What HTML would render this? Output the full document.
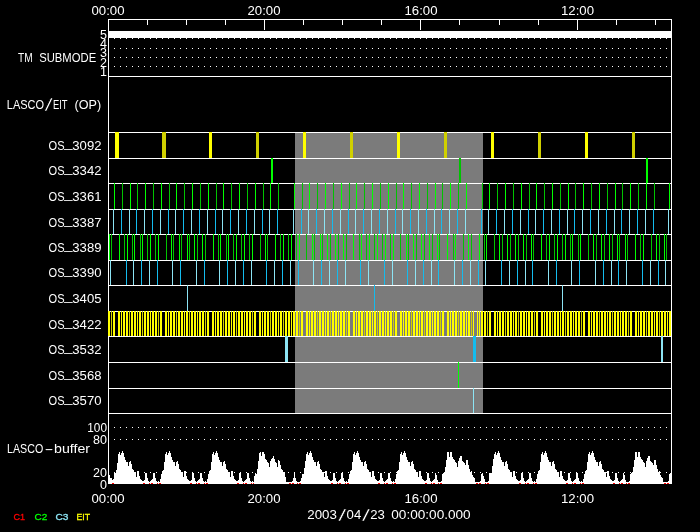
<!DOCTYPE html>
<html><head><meta charset="utf-8"><title>LASCO/EIT schedule</title>
<style>
html,body{margin:0;padding:0;background:#000;}
svg{display:block;}
text{font-family:"Liberation Sans",sans-serif;}
</style></head><body>
<svg width="700" height="532" viewBox="0 0 700 532">
<g shape-rendering="crispEdges">
<rect x="0" y="0" width="700" height="532" fill="#000"/>
<rect x="295" y="132" width="188" height="282" fill="#7b7b7b"/>
<rect x="108" y="19" width="564" height="1" fill="#fff"/>
<rect x="108" y="483" width="564" height="1" fill="#fff"/>
<rect x="108" y="19" width="1" height="465" fill="#fff"/>
<rect x="671" y="19" width="1" height="465" fill="#fff"/>
<rect x="108" y="76" width="563" height="1" fill="#fff"/>
<rect x="108" y="132" width="563" height="1" fill="#fff"/>
<rect x="108" y="158" width="563" height="1" fill="#fff"/>
<rect x="108" y="183" width="563" height="1" fill="#fff"/>
<rect x="108" y="209" width="563" height="1" fill="#fff"/>
<rect x="108" y="234" width="563" height="1" fill="#fff"/>
<rect x="108" y="260" width="563" height="1" fill="#fff"/>
<rect x="108" y="285" width="563" height="1" fill="#fff"/>
<rect x="108" y="311" width="563" height="1" fill="#fff"/>
<rect x="108" y="336" width="563" height="1" fill="#fff"/>
<rect x="108" y="362" width="563" height="1" fill="#fff"/>
<rect x="108" y="388" width="563" height="1" fill="#fff"/>
<rect x="108" y="413" width="563" height="1" fill="#fff"/>
<rect x="108" y="31" width="563" height="7" fill="#fff"/>
<rect x="114" y="38" width="1" height="1" fill="#fff"/>
<rect x="120" y="38" width="1" height="1" fill="#fff"/>
<rect x="126" y="38" width="1" height="1" fill="#fff"/>
<rect x="132" y="38" width="1" height="1" fill="#fff"/>
<rect x="138" y="38" width="1" height="1" fill="#fff"/>
<rect x="144" y="38" width="1" height="1" fill="#fff"/>
<rect x="150" y="38" width="1" height="1" fill="#fff"/>
<rect x="156" y="38" width="1" height="1" fill="#fff"/>
<rect x="162" y="38" width="1" height="1" fill="#fff"/>
<rect x="168" y="38" width="1" height="1" fill="#fff"/>
<rect x="174" y="38" width="1" height="1" fill="#fff"/>
<rect x="180" y="38" width="1" height="1" fill="#fff"/>
<rect x="186" y="38" width="1" height="1" fill="#fff"/>
<rect x="192" y="38" width="1" height="1" fill="#fff"/>
<rect x="198" y="38" width="1" height="1" fill="#fff"/>
<rect x="204" y="38" width="1" height="1" fill="#fff"/>
<rect x="210" y="38" width="1" height="1" fill="#fff"/>
<rect x="216" y="38" width="1" height="1" fill="#fff"/>
<rect x="222" y="38" width="1" height="1" fill="#fff"/>
<rect x="228" y="38" width="1" height="1" fill="#fff"/>
<rect x="234" y="38" width="1" height="1" fill="#fff"/>
<rect x="240" y="38" width="1" height="1" fill="#fff"/>
<rect x="246" y="38" width="1" height="1" fill="#fff"/>
<rect x="252" y="38" width="1" height="1" fill="#fff"/>
<rect x="258" y="38" width="1" height="1" fill="#fff"/>
<rect x="264" y="38" width="1" height="1" fill="#fff"/>
<rect x="270" y="38" width="1" height="1" fill="#fff"/>
<rect x="276" y="38" width="1" height="1" fill="#fff"/>
<rect x="282" y="38" width="1" height="1" fill="#fff"/>
<rect x="288" y="38" width="1" height="1" fill="#fff"/>
<rect x="294" y="38" width="1" height="1" fill="#fff"/>
<rect x="300" y="38" width="1" height="1" fill="#fff"/>
<rect x="306" y="38" width="1" height="1" fill="#fff"/>
<rect x="312" y="38" width="1" height="1" fill="#fff"/>
<rect x="318" y="38" width="1" height="1" fill="#fff"/>
<rect x="324" y="38" width="1" height="1" fill="#fff"/>
<rect x="330" y="38" width="1" height="1" fill="#fff"/>
<rect x="336" y="38" width="1" height="1" fill="#fff"/>
<rect x="342" y="38" width="1" height="1" fill="#fff"/>
<rect x="348" y="38" width="1" height="1" fill="#fff"/>
<rect x="354" y="38" width="1" height="1" fill="#fff"/>
<rect x="360" y="38" width="1" height="1" fill="#fff"/>
<rect x="366" y="38" width="1" height="1" fill="#fff"/>
<rect x="372" y="38" width="1" height="1" fill="#fff"/>
<rect x="378" y="38" width="1" height="1" fill="#fff"/>
<rect x="384" y="38" width="1" height="1" fill="#fff"/>
<rect x="390" y="38" width="1" height="1" fill="#fff"/>
<rect x="396" y="38" width="1" height="1" fill="#fff"/>
<rect x="402" y="38" width="1" height="1" fill="#fff"/>
<rect x="408" y="38" width="1" height="1" fill="#fff"/>
<rect x="414" y="38" width="1" height="1" fill="#fff"/>
<rect x="420" y="38" width="1" height="1" fill="#fff"/>
<rect x="426" y="38" width="1" height="1" fill="#fff"/>
<rect x="432" y="38" width="1" height="1" fill="#fff"/>
<rect x="438" y="38" width="1" height="1" fill="#fff"/>
<rect x="444" y="38" width="1" height="1" fill="#fff"/>
<rect x="450" y="38" width="1" height="1" fill="#fff"/>
<rect x="456" y="38" width="1" height="1" fill="#fff"/>
<rect x="462" y="38" width="1" height="1" fill="#fff"/>
<rect x="468" y="38" width="1" height="1" fill="#fff"/>
<rect x="474" y="38" width="1" height="1" fill="#fff"/>
<rect x="480" y="38" width="1" height="1" fill="#fff"/>
<rect x="486" y="38" width="1" height="1" fill="#fff"/>
<rect x="492" y="38" width="1" height="1" fill="#fff"/>
<rect x="498" y="38" width="1" height="1" fill="#fff"/>
<rect x="504" y="38" width="1" height="1" fill="#fff"/>
<rect x="510" y="38" width="1" height="1" fill="#fff"/>
<rect x="516" y="38" width="1" height="1" fill="#fff"/>
<rect x="522" y="38" width="1" height="1" fill="#fff"/>
<rect x="528" y="38" width="1" height="1" fill="#fff"/>
<rect x="534" y="38" width="1" height="1" fill="#fff"/>
<rect x="540" y="38" width="1" height="1" fill="#fff"/>
<rect x="546" y="38" width="1" height="1" fill="#fff"/>
<rect x="552" y="38" width="1" height="1" fill="#fff"/>
<rect x="558" y="38" width="1" height="1" fill="#fff"/>
<rect x="564" y="38" width="1" height="1" fill="#fff"/>
<rect x="570" y="38" width="1" height="1" fill="#fff"/>
<rect x="576" y="38" width="1" height="1" fill="#fff"/>
<rect x="582" y="38" width="1" height="1" fill="#fff"/>
<rect x="588" y="38" width="1" height="1" fill="#fff"/>
<rect x="594" y="38" width="1" height="1" fill="#fff"/>
<rect x="600" y="38" width="1" height="1" fill="#fff"/>
<rect x="606" y="38" width="1" height="1" fill="#fff"/>
<rect x="612" y="38" width="1" height="1" fill="#fff"/>
<rect x="618" y="38" width="1" height="1" fill="#fff"/>
<rect x="624" y="38" width="1" height="1" fill="#fff"/>
<rect x="630" y="38" width="1" height="1" fill="#fff"/>
<rect x="636" y="38" width="1" height="1" fill="#fff"/>
<rect x="642" y="38" width="1" height="1" fill="#fff"/>
<rect x="648" y="38" width="1" height="1" fill="#fff"/>
<rect x="654" y="38" width="1" height="1" fill="#fff"/>
<rect x="660" y="38" width="1" height="1" fill="#fff"/>
<rect x="666" y="38" width="1" height="1" fill="#fff"/>
<rect x="114" y="48" width="1" height="1" fill="#fff"/>
<rect x="120" y="48" width="1" height="1" fill="#fff"/>
<rect x="126" y="48" width="1" height="1" fill="#fff"/>
<rect x="132" y="48" width="1" height="1" fill="#fff"/>
<rect x="138" y="48" width="1" height="1" fill="#fff"/>
<rect x="144" y="48" width="1" height="1" fill="#fff"/>
<rect x="150" y="48" width="1" height="1" fill="#fff"/>
<rect x="156" y="48" width="1" height="1" fill="#fff"/>
<rect x="162" y="48" width="1" height="1" fill="#fff"/>
<rect x="168" y="48" width="1" height="1" fill="#fff"/>
<rect x="174" y="48" width="1" height="1" fill="#fff"/>
<rect x="180" y="48" width="1" height="1" fill="#fff"/>
<rect x="186" y="48" width="1" height="1" fill="#fff"/>
<rect x="192" y="48" width="1" height="1" fill="#fff"/>
<rect x="198" y="48" width="1" height="1" fill="#fff"/>
<rect x="204" y="48" width="1" height="1" fill="#fff"/>
<rect x="210" y="48" width="1" height="1" fill="#fff"/>
<rect x="216" y="48" width="1" height="1" fill="#fff"/>
<rect x="222" y="48" width="1" height="1" fill="#fff"/>
<rect x="228" y="48" width="1" height="1" fill="#fff"/>
<rect x="234" y="48" width="1" height="1" fill="#fff"/>
<rect x="240" y="48" width="1" height="1" fill="#fff"/>
<rect x="246" y="48" width="1" height="1" fill="#fff"/>
<rect x="252" y="48" width="1" height="1" fill="#fff"/>
<rect x="258" y="48" width="1" height="1" fill="#fff"/>
<rect x="264" y="48" width="1" height="1" fill="#fff"/>
<rect x="270" y="48" width="1" height="1" fill="#fff"/>
<rect x="276" y="48" width="1" height="1" fill="#fff"/>
<rect x="282" y="48" width="1" height="1" fill="#fff"/>
<rect x="288" y="48" width="1" height="1" fill="#fff"/>
<rect x="294" y="48" width="1" height="1" fill="#fff"/>
<rect x="300" y="48" width="1" height="1" fill="#fff"/>
<rect x="306" y="48" width="1" height="1" fill="#fff"/>
<rect x="312" y="48" width="1" height="1" fill="#fff"/>
<rect x="318" y="48" width="1" height="1" fill="#fff"/>
<rect x="324" y="48" width="1" height="1" fill="#fff"/>
<rect x="330" y="48" width="1" height="1" fill="#fff"/>
<rect x="336" y="48" width="1" height="1" fill="#fff"/>
<rect x="342" y="48" width="1" height="1" fill="#fff"/>
<rect x="348" y="48" width="1" height="1" fill="#fff"/>
<rect x="354" y="48" width="1" height="1" fill="#fff"/>
<rect x="360" y="48" width="1" height="1" fill="#fff"/>
<rect x="366" y="48" width="1" height="1" fill="#fff"/>
<rect x="372" y="48" width="1" height="1" fill="#fff"/>
<rect x="378" y="48" width="1" height="1" fill="#fff"/>
<rect x="384" y="48" width="1" height="1" fill="#fff"/>
<rect x="390" y="48" width="1" height="1" fill="#fff"/>
<rect x="396" y="48" width="1" height="1" fill="#fff"/>
<rect x="402" y="48" width="1" height="1" fill="#fff"/>
<rect x="408" y="48" width="1" height="1" fill="#fff"/>
<rect x="414" y="48" width="1" height="1" fill="#fff"/>
<rect x="420" y="48" width="1" height="1" fill="#fff"/>
<rect x="426" y="48" width="1" height="1" fill="#fff"/>
<rect x="432" y="48" width="1" height="1" fill="#fff"/>
<rect x="438" y="48" width="1" height="1" fill="#fff"/>
<rect x="444" y="48" width="1" height="1" fill="#fff"/>
<rect x="450" y="48" width="1" height="1" fill="#fff"/>
<rect x="456" y="48" width="1" height="1" fill="#fff"/>
<rect x="462" y="48" width="1" height="1" fill="#fff"/>
<rect x="468" y="48" width="1" height="1" fill="#fff"/>
<rect x="474" y="48" width="1" height="1" fill="#fff"/>
<rect x="480" y="48" width="1" height="1" fill="#fff"/>
<rect x="486" y="48" width="1" height="1" fill="#fff"/>
<rect x="492" y="48" width="1" height="1" fill="#fff"/>
<rect x="498" y="48" width="1" height="1" fill="#fff"/>
<rect x="504" y="48" width="1" height="1" fill="#fff"/>
<rect x="510" y="48" width="1" height="1" fill="#fff"/>
<rect x="516" y="48" width="1" height="1" fill="#fff"/>
<rect x="522" y="48" width="1" height="1" fill="#fff"/>
<rect x="528" y="48" width="1" height="1" fill="#fff"/>
<rect x="534" y="48" width="1" height="1" fill="#fff"/>
<rect x="540" y="48" width="1" height="1" fill="#fff"/>
<rect x="546" y="48" width="1" height="1" fill="#fff"/>
<rect x="552" y="48" width="1" height="1" fill="#fff"/>
<rect x="558" y="48" width="1" height="1" fill="#fff"/>
<rect x="564" y="48" width="1" height="1" fill="#fff"/>
<rect x="570" y="48" width="1" height="1" fill="#fff"/>
<rect x="576" y="48" width="1" height="1" fill="#fff"/>
<rect x="582" y="48" width="1" height="1" fill="#fff"/>
<rect x="588" y="48" width="1" height="1" fill="#fff"/>
<rect x="594" y="48" width="1" height="1" fill="#fff"/>
<rect x="600" y="48" width="1" height="1" fill="#fff"/>
<rect x="606" y="48" width="1" height="1" fill="#fff"/>
<rect x="612" y="48" width="1" height="1" fill="#fff"/>
<rect x="618" y="48" width="1" height="1" fill="#fff"/>
<rect x="624" y="48" width="1" height="1" fill="#fff"/>
<rect x="630" y="48" width="1" height="1" fill="#fff"/>
<rect x="636" y="48" width="1" height="1" fill="#fff"/>
<rect x="642" y="48" width="1" height="1" fill="#fff"/>
<rect x="648" y="48" width="1" height="1" fill="#fff"/>
<rect x="654" y="48" width="1" height="1" fill="#fff"/>
<rect x="660" y="48" width="1" height="1" fill="#fff"/>
<rect x="666" y="48" width="1" height="1" fill="#fff"/>
<rect x="114" y="57" width="1" height="1" fill="#fff"/>
<rect x="120" y="57" width="1" height="1" fill="#fff"/>
<rect x="126" y="57" width="1" height="1" fill="#fff"/>
<rect x="132" y="57" width="1" height="1" fill="#fff"/>
<rect x="138" y="57" width="1" height="1" fill="#fff"/>
<rect x="144" y="57" width="1" height="1" fill="#fff"/>
<rect x="150" y="57" width="1" height="1" fill="#fff"/>
<rect x="156" y="57" width="1" height="1" fill="#fff"/>
<rect x="162" y="57" width="1" height="1" fill="#fff"/>
<rect x="168" y="57" width="1" height="1" fill="#fff"/>
<rect x="174" y="57" width="1" height="1" fill="#fff"/>
<rect x="180" y="57" width="1" height="1" fill="#fff"/>
<rect x="186" y="57" width="1" height="1" fill="#fff"/>
<rect x="192" y="57" width="1" height="1" fill="#fff"/>
<rect x="198" y="57" width="1" height="1" fill="#fff"/>
<rect x="204" y="57" width="1" height="1" fill="#fff"/>
<rect x="210" y="57" width="1" height="1" fill="#fff"/>
<rect x="216" y="57" width="1" height="1" fill="#fff"/>
<rect x="222" y="57" width="1" height="1" fill="#fff"/>
<rect x="228" y="57" width="1" height="1" fill="#fff"/>
<rect x="234" y="57" width="1" height="1" fill="#fff"/>
<rect x="240" y="57" width="1" height="1" fill="#fff"/>
<rect x="246" y="57" width="1" height="1" fill="#fff"/>
<rect x="252" y="57" width="1" height="1" fill="#fff"/>
<rect x="258" y="57" width="1" height="1" fill="#fff"/>
<rect x="264" y="57" width="1" height="1" fill="#fff"/>
<rect x="270" y="57" width="1" height="1" fill="#fff"/>
<rect x="276" y="57" width="1" height="1" fill="#fff"/>
<rect x="282" y="57" width="1" height="1" fill="#fff"/>
<rect x="288" y="57" width="1" height="1" fill="#fff"/>
<rect x="294" y="57" width="1" height="1" fill="#fff"/>
<rect x="300" y="57" width="1" height="1" fill="#fff"/>
<rect x="306" y="57" width="1" height="1" fill="#fff"/>
<rect x="312" y="57" width="1" height="1" fill="#fff"/>
<rect x="318" y="57" width="1" height="1" fill="#fff"/>
<rect x="324" y="57" width="1" height="1" fill="#fff"/>
<rect x="330" y="57" width="1" height="1" fill="#fff"/>
<rect x="336" y="57" width="1" height="1" fill="#fff"/>
<rect x="342" y="57" width="1" height="1" fill="#fff"/>
<rect x="348" y="57" width="1" height="1" fill="#fff"/>
<rect x="354" y="57" width="1" height="1" fill="#fff"/>
<rect x="360" y="57" width="1" height="1" fill="#fff"/>
<rect x="366" y="57" width="1" height="1" fill="#fff"/>
<rect x="372" y="57" width="1" height="1" fill="#fff"/>
<rect x="378" y="57" width="1" height="1" fill="#fff"/>
<rect x="384" y="57" width="1" height="1" fill="#fff"/>
<rect x="390" y="57" width="1" height="1" fill="#fff"/>
<rect x="396" y="57" width="1" height="1" fill="#fff"/>
<rect x="402" y="57" width="1" height="1" fill="#fff"/>
<rect x="408" y="57" width="1" height="1" fill="#fff"/>
<rect x="414" y="57" width="1" height="1" fill="#fff"/>
<rect x="420" y="57" width="1" height="1" fill="#fff"/>
<rect x="426" y="57" width="1" height="1" fill="#fff"/>
<rect x="432" y="57" width="1" height="1" fill="#fff"/>
<rect x="438" y="57" width="1" height="1" fill="#fff"/>
<rect x="444" y="57" width="1" height="1" fill="#fff"/>
<rect x="450" y="57" width="1" height="1" fill="#fff"/>
<rect x="456" y="57" width="1" height="1" fill="#fff"/>
<rect x="462" y="57" width="1" height="1" fill="#fff"/>
<rect x="468" y="57" width="1" height="1" fill="#fff"/>
<rect x="474" y="57" width="1" height="1" fill="#fff"/>
<rect x="480" y="57" width="1" height="1" fill="#fff"/>
<rect x="486" y="57" width="1" height="1" fill="#fff"/>
<rect x="492" y="57" width="1" height="1" fill="#fff"/>
<rect x="498" y="57" width="1" height="1" fill="#fff"/>
<rect x="504" y="57" width="1" height="1" fill="#fff"/>
<rect x="510" y="57" width="1" height="1" fill="#fff"/>
<rect x="516" y="57" width="1" height="1" fill="#fff"/>
<rect x="522" y="57" width="1" height="1" fill="#fff"/>
<rect x="528" y="57" width="1" height="1" fill="#fff"/>
<rect x="534" y="57" width="1" height="1" fill="#fff"/>
<rect x="540" y="57" width="1" height="1" fill="#fff"/>
<rect x="546" y="57" width="1" height="1" fill="#fff"/>
<rect x="552" y="57" width="1" height="1" fill="#fff"/>
<rect x="558" y="57" width="1" height="1" fill="#fff"/>
<rect x="564" y="57" width="1" height="1" fill="#fff"/>
<rect x="570" y="57" width="1" height="1" fill="#fff"/>
<rect x="576" y="57" width="1" height="1" fill="#fff"/>
<rect x="582" y="57" width="1" height="1" fill="#fff"/>
<rect x="588" y="57" width="1" height="1" fill="#fff"/>
<rect x="594" y="57" width="1" height="1" fill="#fff"/>
<rect x="600" y="57" width="1" height="1" fill="#fff"/>
<rect x="606" y="57" width="1" height="1" fill="#fff"/>
<rect x="612" y="57" width="1" height="1" fill="#fff"/>
<rect x="618" y="57" width="1" height="1" fill="#fff"/>
<rect x="624" y="57" width="1" height="1" fill="#fff"/>
<rect x="630" y="57" width="1" height="1" fill="#fff"/>
<rect x="636" y="57" width="1" height="1" fill="#fff"/>
<rect x="642" y="57" width="1" height="1" fill="#fff"/>
<rect x="648" y="57" width="1" height="1" fill="#fff"/>
<rect x="654" y="57" width="1" height="1" fill="#fff"/>
<rect x="660" y="57" width="1" height="1" fill="#fff"/>
<rect x="666" y="57" width="1" height="1" fill="#fff"/>
<rect x="114" y="66" width="1" height="1" fill="#fff"/>
<rect x="120" y="66" width="1" height="1" fill="#fff"/>
<rect x="126" y="66" width="1" height="1" fill="#fff"/>
<rect x="132" y="66" width="1" height="1" fill="#fff"/>
<rect x="138" y="66" width="1" height="1" fill="#fff"/>
<rect x="144" y="66" width="1" height="1" fill="#fff"/>
<rect x="150" y="66" width="1" height="1" fill="#fff"/>
<rect x="156" y="66" width="1" height="1" fill="#fff"/>
<rect x="162" y="66" width="1" height="1" fill="#fff"/>
<rect x="168" y="66" width="1" height="1" fill="#fff"/>
<rect x="174" y="66" width="1" height="1" fill="#fff"/>
<rect x="180" y="66" width="1" height="1" fill="#fff"/>
<rect x="186" y="66" width="1" height="1" fill="#fff"/>
<rect x="192" y="66" width="1" height="1" fill="#fff"/>
<rect x="198" y="66" width="1" height="1" fill="#fff"/>
<rect x="204" y="66" width="1" height="1" fill="#fff"/>
<rect x="210" y="66" width="1" height="1" fill="#fff"/>
<rect x="216" y="66" width="1" height="1" fill="#fff"/>
<rect x="222" y="66" width="1" height="1" fill="#fff"/>
<rect x="228" y="66" width="1" height="1" fill="#fff"/>
<rect x="234" y="66" width="1" height="1" fill="#fff"/>
<rect x="240" y="66" width="1" height="1" fill="#fff"/>
<rect x="246" y="66" width="1" height="1" fill="#fff"/>
<rect x="252" y="66" width="1" height="1" fill="#fff"/>
<rect x="258" y="66" width="1" height="1" fill="#fff"/>
<rect x="264" y="66" width="1" height="1" fill="#fff"/>
<rect x="270" y="66" width="1" height="1" fill="#fff"/>
<rect x="276" y="66" width="1" height="1" fill="#fff"/>
<rect x="282" y="66" width="1" height="1" fill="#fff"/>
<rect x="288" y="66" width="1" height="1" fill="#fff"/>
<rect x="294" y="66" width="1" height="1" fill="#fff"/>
<rect x="300" y="66" width="1" height="1" fill="#fff"/>
<rect x="306" y="66" width="1" height="1" fill="#fff"/>
<rect x="312" y="66" width="1" height="1" fill="#fff"/>
<rect x="318" y="66" width="1" height="1" fill="#fff"/>
<rect x="324" y="66" width="1" height="1" fill="#fff"/>
<rect x="330" y="66" width="1" height="1" fill="#fff"/>
<rect x="336" y="66" width="1" height="1" fill="#fff"/>
<rect x="342" y="66" width="1" height="1" fill="#fff"/>
<rect x="348" y="66" width="1" height="1" fill="#fff"/>
<rect x="354" y="66" width="1" height="1" fill="#fff"/>
<rect x="360" y="66" width="1" height="1" fill="#fff"/>
<rect x="366" y="66" width="1" height="1" fill="#fff"/>
<rect x="372" y="66" width="1" height="1" fill="#fff"/>
<rect x="378" y="66" width="1" height="1" fill="#fff"/>
<rect x="384" y="66" width="1" height="1" fill="#fff"/>
<rect x="390" y="66" width="1" height="1" fill="#fff"/>
<rect x="396" y="66" width="1" height="1" fill="#fff"/>
<rect x="402" y="66" width="1" height="1" fill="#fff"/>
<rect x="408" y="66" width="1" height="1" fill="#fff"/>
<rect x="414" y="66" width="1" height="1" fill="#fff"/>
<rect x="420" y="66" width="1" height="1" fill="#fff"/>
<rect x="426" y="66" width="1" height="1" fill="#fff"/>
<rect x="432" y="66" width="1" height="1" fill="#fff"/>
<rect x="438" y="66" width="1" height="1" fill="#fff"/>
<rect x="444" y="66" width="1" height="1" fill="#fff"/>
<rect x="450" y="66" width="1" height="1" fill="#fff"/>
<rect x="456" y="66" width="1" height="1" fill="#fff"/>
<rect x="462" y="66" width="1" height="1" fill="#fff"/>
<rect x="468" y="66" width="1" height="1" fill="#fff"/>
<rect x="474" y="66" width="1" height="1" fill="#fff"/>
<rect x="480" y="66" width="1" height="1" fill="#fff"/>
<rect x="486" y="66" width="1" height="1" fill="#fff"/>
<rect x="492" y="66" width="1" height="1" fill="#fff"/>
<rect x="498" y="66" width="1" height="1" fill="#fff"/>
<rect x="504" y="66" width="1" height="1" fill="#fff"/>
<rect x="510" y="66" width="1" height="1" fill="#fff"/>
<rect x="516" y="66" width="1" height="1" fill="#fff"/>
<rect x="522" y="66" width="1" height="1" fill="#fff"/>
<rect x="528" y="66" width="1" height="1" fill="#fff"/>
<rect x="534" y="66" width="1" height="1" fill="#fff"/>
<rect x="540" y="66" width="1" height="1" fill="#fff"/>
<rect x="546" y="66" width="1" height="1" fill="#fff"/>
<rect x="552" y="66" width="1" height="1" fill="#fff"/>
<rect x="558" y="66" width="1" height="1" fill="#fff"/>
<rect x="564" y="66" width="1" height="1" fill="#fff"/>
<rect x="570" y="66" width="1" height="1" fill="#fff"/>
<rect x="576" y="66" width="1" height="1" fill="#fff"/>
<rect x="582" y="66" width="1" height="1" fill="#fff"/>
<rect x="588" y="66" width="1" height="1" fill="#fff"/>
<rect x="594" y="66" width="1" height="1" fill="#fff"/>
<rect x="600" y="66" width="1" height="1" fill="#fff"/>
<rect x="606" y="66" width="1" height="1" fill="#fff"/>
<rect x="612" y="66" width="1" height="1" fill="#fff"/>
<rect x="618" y="66" width="1" height="1" fill="#fff"/>
<rect x="624" y="66" width="1" height="1" fill="#fff"/>
<rect x="630" y="66" width="1" height="1" fill="#fff"/>
<rect x="636" y="66" width="1" height="1" fill="#fff"/>
<rect x="642" y="66" width="1" height="1" fill="#fff"/>
<rect x="648" y="66" width="1" height="1" fill="#fff"/>
<rect x="654" y="66" width="1" height="1" fill="#fff"/>
<rect x="660" y="66" width="1" height="1" fill="#fff"/>
<rect x="666" y="66" width="1" height="1" fill="#fff"/>
<rect x="115" y="132" width="4" height="26" fill="#ffff00"/>
<rect x="162" y="132" width="4" height="26" fill="#d0d000"/>
<rect x="209" y="132" width="3" height="26" fill="#ffff00"/>
<rect x="256" y="132" width="3" height="26" fill="#d0d000"/>
<rect x="303" y="132" width="3" height="26" fill="#ffff00"/>
<rect x="350" y="132" width="3" height="26" fill="#d0d000"/>
<rect x="397" y="132" width="3" height="26" fill="#ffff00"/>
<rect x="444" y="132" width="3" height="26" fill="#d0d000"/>
<rect x="491" y="132" width="3" height="26" fill="#ffff00"/>
<rect x="538" y="132" width="3" height="26" fill="#d0d000"/>
<rect x="585" y="132" width="3" height="26" fill="#ffff00"/>
<rect x="632" y="132" width="3" height="26" fill="#d0d000"/>
<rect x="271" y="158" width="2" height="25" fill="#00ff00"/>
<rect x="459" y="158" width="2" height="25" fill="#00c400"/>
<rect x="646" y="158" width="2" height="25" fill="#00ff00"/>
<rect x="114" y="183" width="1" height="26" fill="#00ff00"/>
<rect x="113" y="209" width="1" height="25" fill="#8ce4f4"/>
<rect x="122" y="183" width="1" height="26" fill="#00c400"/>
<rect x="121" y="209" width="1" height="25" fill="#14bcee"/>
<rect x="130" y="183" width="1" height="26" fill="#00ff00"/>
<rect x="129" y="209" width="1" height="25" fill="#8ce4f4"/>
<rect x="137" y="183" width="1" height="26" fill="#00c400"/>
<rect x="136" y="209" width="1" height="25" fill="#14bcee"/>
<rect x="145" y="183" width="1" height="26" fill="#00ff00"/>
<rect x="144" y="209" width="1" height="25" fill="#8ce4f4"/>
<rect x="153" y="183" width="1" height="26" fill="#00c400"/>
<rect x="152" y="209" width="1" height="25" fill="#14bcee"/>
<rect x="161" y="183" width="1" height="26" fill="#00ff00"/>
<rect x="160" y="209" width="1" height="25" fill="#8ce4f4"/>
<rect x="169" y="183" width="1" height="26" fill="#00c400"/>
<rect x="168" y="209" width="1" height="25" fill="#14bcee"/>
<rect x="176" y="183" width="1" height="26" fill="#00ff00"/>
<rect x="175" y="209" width="1" height="25" fill="#8ce4f4"/>
<rect x="184" y="183" width="1" height="26" fill="#00c400"/>
<rect x="183" y="209" width="1" height="25" fill="#14bcee"/>
<rect x="192" y="183" width="1" height="26" fill="#00ff00"/>
<rect x="191" y="209" width="1" height="25" fill="#8ce4f4"/>
<rect x="200" y="183" width="1" height="26" fill="#00c400"/>
<rect x="199" y="209" width="1" height="25" fill="#14bcee"/>
<rect x="208" y="183" width="1" height="26" fill="#00ff00"/>
<rect x="207" y="209" width="1" height="25" fill="#8ce4f4"/>
<rect x="216" y="183" width="1" height="26" fill="#00c400"/>
<rect x="215" y="209" width="1" height="25" fill="#14bcee"/>
<rect x="223" y="183" width="1" height="26" fill="#00ff00"/>
<rect x="222" y="209" width="1" height="25" fill="#8ce4f4"/>
<rect x="231" y="183" width="1" height="26" fill="#00c400"/>
<rect x="230" y="209" width="1" height="25" fill="#14bcee"/>
<rect x="239" y="183" width="1" height="26" fill="#00ff00"/>
<rect x="238" y="209" width="1" height="25" fill="#8ce4f4"/>
<rect x="247" y="183" width="1" height="26" fill="#00c400"/>
<rect x="246" y="209" width="1" height="25" fill="#14bcee"/>
<rect x="255" y="183" width="1" height="26" fill="#00ff00"/>
<rect x="254" y="209" width="1" height="25" fill="#8ce4f4"/>
<rect x="263" y="183" width="1" height="26" fill="#00c400"/>
<rect x="262" y="209" width="1" height="25" fill="#14bcee"/>
<rect x="270" y="183" width="1" height="26" fill="#00ff00"/>
<rect x="269" y="209" width="1" height="25" fill="#8ce4f4"/>
<rect x="278" y="183" width="1" height="26" fill="#00c400"/>
<rect x="277" y="209" width="1" height="25" fill="#14bcee"/>
<rect x="294" y="183" width="1" height="26" fill="#00ff00"/>
<rect x="293" y="209" width="1" height="25" fill="#8ce4f4"/>
<rect x="302" y="183" width="1" height="26" fill="#00c400"/>
<rect x="301" y="209" width="1" height="25" fill="#14bcee"/>
<rect x="309" y="183" width="1" height="26" fill="#00ff00"/>
<rect x="308" y="209" width="1" height="25" fill="#8ce4f4"/>
<rect x="317" y="183" width="1" height="26" fill="#00c400"/>
<rect x="316" y="209" width="1" height="25" fill="#14bcee"/>
<rect x="325" y="183" width="1" height="26" fill="#00ff00"/>
<rect x="324" y="209" width="1" height="25" fill="#8ce4f4"/>
<rect x="333" y="183" width="1" height="26" fill="#00c400"/>
<rect x="332" y="209" width="1" height="25" fill="#14bcee"/>
<rect x="341" y="183" width="1" height="26" fill="#00ff00"/>
<rect x="340" y="209" width="1" height="25" fill="#8ce4f4"/>
<rect x="349" y="183" width="1" height="26" fill="#00c400"/>
<rect x="348" y="209" width="1" height="25" fill="#14bcee"/>
<rect x="356" y="183" width="1" height="26" fill="#00ff00"/>
<rect x="355" y="209" width="1" height="25" fill="#8ce4f4"/>
<rect x="364" y="183" width="1" height="26" fill="#00c400"/>
<rect x="363" y="209" width="1" height="25" fill="#14bcee"/>
<rect x="372" y="183" width="1" height="26" fill="#00ff00"/>
<rect x="371" y="209" width="1" height="25" fill="#8ce4f4"/>
<rect x="380" y="183" width="1" height="26" fill="#00c400"/>
<rect x="379" y="209" width="1" height="25" fill="#14bcee"/>
<rect x="388" y="183" width="1" height="26" fill="#00ff00"/>
<rect x="387" y="209" width="1" height="25" fill="#8ce4f4"/>
<rect x="396" y="183" width="1" height="26" fill="#00c400"/>
<rect x="395" y="209" width="1" height="25" fill="#14bcee"/>
<rect x="403" y="183" width="1" height="26" fill="#00ff00"/>
<rect x="402" y="209" width="1" height="25" fill="#8ce4f4"/>
<rect x="411" y="183" width="1" height="26" fill="#00c400"/>
<rect x="410" y="209" width="1" height="25" fill="#14bcee"/>
<rect x="419" y="183" width="1" height="26" fill="#00ff00"/>
<rect x="418" y="209" width="1" height="25" fill="#8ce4f4"/>
<rect x="427" y="183" width="1" height="26" fill="#00c400"/>
<rect x="426" y="209" width="1" height="25" fill="#14bcee"/>
<rect x="435" y="183" width="1" height="26" fill="#00ff00"/>
<rect x="434" y="209" width="1" height="25" fill="#8ce4f4"/>
<rect x="442" y="183" width="1" height="26" fill="#00c400"/>
<rect x="441" y="209" width="1" height="25" fill="#14bcee"/>
<rect x="450" y="183" width="1" height="26" fill="#00ff00"/>
<rect x="449" y="209" width="1" height="25" fill="#8ce4f4"/>
<rect x="458" y="183" width="1" height="26" fill="#00c400"/>
<rect x="457" y="209" width="1" height="25" fill="#14bcee"/>
<rect x="466" y="183" width="1" height="26" fill="#00ff00"/>
<rect x="465" y="209" width="1" height="25" fill="#8ce4f4"/>
<rect x="482" y="183" width="1" height="26" fill="#00c400"/>
<rect x="481" y="209" width="1" height="25" fill="#14bcee"/>
<rect x="489" y="183" width="1" height="26" fill="#00ff00"/>
<rect x="488" y="209" width="1" height="25" fill="#8ce4f4"/>
<rect x="497" y="183" width="1" height="26" fill="#00c400"/>
<rect x="496" y="209" width="1" height="25" fill="#14bcee"/>
<rect x="505" y="183" width="1" height="26" fill="#00ff00"/>
<rect x="504" y="209" width="1" height="25" fill="#8ce4f4"/>
<rect x="513" y="183" width="1" height="26" fill="#00c400"/>
<rect x="512" y="209" width="1" height="25" fill="#14bcee"/>
<rect x="521" y="183" width="1" height="26" fill="#00ff00"/>
<rect x="520" y="209" width="1" height="25" fill="#8ce4f4"/>
<rect x="529" y="183" width="1" height="26" fill="#00c400"/>
<rect x="528" y="209" width="1" height="25" fill="#14bcee"/>
<rect x="536" y="183" width="1" height="26" fill="#00ff00"/>
<rect x="535" y="209" width="1" height="25" fill="#8ce4f4"/>
<rect x="544" y="183" width="1" height="26" fill="#00c400"/>
<rect x="543" y="209" width="1" height="25" fill="#14bcee"/>
<rect x="552" y="183" width="1" height="26" fill="#00ff00"/>
<rect x="551" y="209" width="1" height="25" fill="#8ce4f4"/>
<rect x="560" y="183" width="1" height="26" fill="#00c400"/>
<rect x="559" y="209" width="1" height="25" fill="#14bcee"/>
<rect x="568" y="183" width="1" height="26" fill="#00ff00"/>
<rect x="567" y="209" width="1" height="25" fill="#8ce4f4"/>
<rect x="575" y="183" width="1" height="26" fill="#00c400"/>
<rect x="574" y="209" width="1" height="25" fill="#14bcee"/>
<rect x="583" y="183" width="1" height="26" fill="#00ff00"/>
<rect x="582" y="209" width="1" height="25" fill="#8ce4f4"/>
<rect x="591" y="183" width="1" height="26" fill="#00c400"/>
<rect x="590" y="209" width="1" height="25" fill="#14bcee"/>
<rect x="599" y="183" width="1" height="26" fill="#00ff00"/>
<rect x="598" y="209" width="1" height="25" fill="#8ce4f4"/>
<rect x="607" y="183" width="1" height="26" fill="#00c400"/>
<rect x="606" y="209" width="1" height="25" fill="#14bcee"/>
<rect x="615" y="183" width="1" height="26" fill="#00ff00"/>
<rect x="614" y="209" width="1" height="25" fill="#8ce4f4"/>
<rect x="622" y="183" width="1" height="26" fill="#00c400"/>
<rect x="621" y="209" width="1" height="25" fill="#14bcee"/>
<rect x="630" y="183" width="1" height="26" fill="#00ff00"/>
<rect x="629" y="209" width="1" height="25" fill="#8ce4f4"/>
<rect x="638" y="183" width="1" height="26" fill="#00c400"/>
<rect x="637" y="209" width="1" height="25" fill="#14bcee"/>
<rect x="646" y="183" width="1" height="26" fill="#00ff00"/>
<rect x="645" y="209" width="1" height="25" fill="#8ce4f4"/>
<rect x="654" y="183" width="1" height="26" fill="#00c400"/>
<rect x="653" y="209" width="1" height="25" fill="#14bcee"/>
<rect x="669" y="183" width="1" height="26" fill="#00ff00"/>
<rect x="668" y="209" width="1" height="25" fill="#8ce4f4"/>
<rect x="109" y="234" width="1" height="26" fill="#00ff00"/>
<rect x="111" y="234" width="1" height="26" fill="#00c400"/>
<rect x="119" y="234" width="1" height="26" fill="#00ff00"/>
<rect x="124" y="234" width="1" height="26" fill="#00c400"/>
<rect x="127" y="234" width="1" height="26" fill="#00ff00"/>
<rect x="132" y="234" width="1" height="26" fill="#00c400"/>
<rect x="134" y="234" width="1" height="26" fill="#00ff00"/>
<rect x="140" y="234" width="1" height="26" fill="#00c400"/>
<rect x="142" y="234" width="1" height="26" fill="#00ff00"/>
<rect x="147" y="234" width="1" height="26" fill="#00c400"/>
<rect x="150" y="234" width="1" height="26" fill="#00ff00"/>
<rect x="155" y="234" width="1" height="26" fill="#00c400"/>
<rect x="158" y="234" width="1" height="26" fill="#00ff00"/>
<rect x="166" y="234" width="1" height="26" fill="#00c400"/>
<rect x="171" y="234" width="1" height="26" fill="#00ff00"/>
<rect x="173" y="234" width="1" height="26" fill="#00c400"/>
<rect x="179" y="234" width="1" height="26" fill="#00ff00"/>
<rect x="181" y="234" width="1" height="26" fill="#00c400"/>
<rect x="187" y="234" width="1" height="26" fill="#00ff00"/>
<rect x="189" y="234" width="1" height="26" fill="#00c400"/>
<rect x="194" y="234" width="1" height="26" fill="#00ff00"/>
<rect x="197" y="234" width="1" height="26" fill="#00c400"/>
<rect x="202" y="234" width="1" height="26" fill="#00ff00"/>
<rect x="205" y="234" width="1" height="26" fill="#00c400"/>
<rect x="213" y="234" width="1" height="26" fill="#00ff00"/>
<rect x="218" y="234" width="1" height="26" fill="#00c400"/>
<rect x="220" y="234" width="1" height="26" fill="#00ff00"/>
<rect x="226" y="234" width="1" height="26" fill="#00c400"/>
<rect x="228" y="234" width="1" height="26" fill="#00ff00"/>
<rect x="233" y="234" width="1" height="26" fill="#00c400"/>
<rect x="236" y="234" width="1" height="26" fill="#00ff00"/>
<rect x="241" y="234" width="1" height="26" fill="#00c400"/>
<rect x="244" y="234" width="1" height="26" fill="#00ff00"/>
<rect x="249" y="234" width="1" height="26" fill="#00c400"/>
<rect x="252" y="234" width="1" height="26" fill="#00ff00"/>
<rect x="260" y="234" width="1" height="26" fill="#00c400"/>
<rect x="265" y="234" width="1" height="26" fill="#00ff00"/>
<rect x="267" y="234" width="1" height="26" fill="#00c400"/>
<rect x="275" y="234" width="1" height="26" fill="#00ff00"/>
<rect x="280" y="234" width="1" height="26" fill="#00c400"/>
<rect x="283" y="234" width="1" height="26" fill="#00ff00"/>
<rect x="288" y="234" width="1" height="26" fill="#00c400"/>
<rect x="291" y="234" width="1" height="26" fill="#00ff00"/>
<rect x="296" y="234" width="1" height="26" fill="#00c400"/>
<rect x="299" y="234" width="1" height="26" fill="#00ff00"/>
<rect x="306" y="234" width="1" height="26" fill="#00c400"/>
<rect x="312" y="234" width="1" height="26" fill="#00ff00"/>
<rect x="314" y="234" width="1" height="26" fill="#00c400"/>
<rect x="320" y="234" width="1" height="26" fill="#00ff00"/>
<rect x="322" y="234" width="1" height="26" fill="#00c400"/>
<rect x="327" y="234" width="1" height="26" fill="#00ff00"/>
<rect x="330" y="234" width="1" height="26" fill="#00c400"/>
<rect x="335" y="234" width="1" height="26" fill="#00ff00"/>
<rect x="338" y="234" width="1" height="26" fill="#00c400"/>
<rect x="343" y="234" width="1" height="26" fill="#00ff00"/>
<rect x="346" y="234" width="1" height="26" fill="#00c400"/>
<rect x="353" y="234" width="1" height="26" fill="#00ff00"/>
<rect x="359" y="234" width="1" height="26" fill="#00c400"/>
<rect x="361" y="234" width="1" height="26" fill="#00ff00"/>
<rect x="366" y="234" width="1" height="26" fill="#00c400"/>
<rect x="369" y="234" width="1" height="26" fill="#00ff00"/>
<rect x="374" y="234" width="1" height="26" fill="#00c400"/>
<rect x="377" y="234" width="1" height="26" fill="#00ff00"/>
<rect x="382" y="234" width="1" height="26" fill="#00c400"/>
<rect x="385" y="234" width="1" height="26" fill="#00ff00"/>
<rect x="390" y="234" width="1" height="26" fill="#00c400"/>
<rect x="393" y="234" width="1" height="26" fill="#00ff00"/>
<rect x="400" y="234" width="1" height="26" fill="#00c400"/>
<rect x="406" y="234" width="1" height="26" fill="#00ff00"/>
<rect x="408" y="234" width="1" height="26" fill="#00c400"/>
<rect x="413" y="234" width="1" height="26" fill="#00ff00"/>
<rect x="416" y="234" width="1" height="26" fill="#00c400"/>
<rect x="421" y="234" width="1" height="26" fill="#00ff00"/>
<rect x="424" y="234" width="1" height="26" fill="#00c400"/>
<rect x="429" y="234" width="1" height="26" fill="#00ff00"/>
<rect x="432" y="234" width="1" height="26" fill="#00c400"/>
<rect x="437" y="234" width="1" height="26" fill="#00ff00"/>
<rect x="439" y="234" width="1" height="26" fill="#00c400"/>
<rect x="447" y="234" width="1" height="26" fill="#00ff00"/>
<rect x="453" y="234" width="1" height="26" fill="#00c400"/>
<rect x="455" y="234" width="1" height="26" fill="#00ff00"/>
<rect x="463" y="234" width="1" height="26" fill="#00c400"/>
<rect x="468" y="234" width="1" height="26" fill="#00ff00"/>
<rect x="471" y="234" width="1" height="26" fill="#00c400"/>
<rect x="479" y="234" width="1" height="26" fill="#00ff00"/>
<rect x="484" y="234" width="1" height="26" fill="#00c400"/>
<rect x="486" y="234" width="1" height="26" fill="#00ff00"/>
<rect x="494" y="234" width="1" height="26" fill="#00c400"/>
<rect x="499" y="234" width="1" height="26" fill="#00ff00"/>
<rect x="502" y="234" width="1" height="26" fill="#00c400"/>
<rect x="507" y="234" width="1" height="26" fill="#00ff00"/>
<rect x="510" y="234" width="1" height="26" fill="#00c400"/>
<rect x="515" y="234" width="1" height="26" fill="#00ff00"/>
<rect x="518" y="234" width="1" height="26" fill="#00c400"/>
<rect x="523" y="234" width="1" height="26" fill="#00ff00"/>
<rect x="526" y="234" width="1" height="26" fill="#00c400"/>
<rect x="531" y="234" width="1" height="26" fill="#00ff00"/>
<rect x="533" y="234" width="1" height="26" fill="#00c400"/>
<rect x="541" y="234" width="1" height="26" fill="#00ff00"/>
<rect x="546" y="234" width="1" height="26" fill="#00c400"/>
<rect x="549" y="234" width="1" height="26" fill="#00ff00"/>
<rect x="554" y="234" width="1" height="26" fill="#00c400"/>
<rect x="557" y="234" width="1" height="26" fill="#00ff00"/>
<rect x="562" y="234" width="1" height="26" fill="#00c400"/>
<rect x="565" y="234" width="1" height="26" fill="#00ff00"/>
<rect x="570" y="234" width="1" height="26" fill="#00c400"/>
<rect x="572" y="234" width="1" height="26" fill="#00ff00"/>
<rect x="578" y="234" width="1" height="26" fill="#00c400"/>
<rect x="580" y="234" width="1" height="26" fill="#00ff00"/>
<rect x="588" y="234" width="1" height="26" fill="#00c400"/>
<rect x="593" y="234" width="1" height="26" fill="#00ff00"/>
<rect x="596" y="234" width="1" height="26" fill="#00c400"/>
<rect x="601" y="234" width="1" height="26" fill="#00ff00"/>
<rect x="604" y="234" width="1" height="26" fill="#00c400"/>
<rect x="609" y="234" width="1" height="26" fill="#00ff00"/>
<rect x="612" y="234" width="1" height="26" fill="#00c400"/>
<rect x="617" y="234" width="1" height="26" fill="#00ff00"/>
<rect x="619" y="234" width="1" height="26" fill="#00c400"/>
<rect x="625" y="234" width="1" height="26" fill="#00ff00"/>
<rect x="627" y="234" width="1" height="26" fill="#00c400"/>
<rect x="635" y="234" width="1" height="26" fill="#00ff00"/>
<rect x="640" y="234" width="1" height="26" fill="#00c400"/>
<rect x="643" y="234" width="1" height="26" fill="#00ff00"/>
<rect x="651" y="234" width="1" height="26" fill="#00c400"/>
<rect x="656" y="234" width="1" height="26" fill="#00ff00"/>
<rect x="659" y="234" width="1" height="26" fill="#00c400"/>
<rect x="664" y="234" width="1" height="26" fill="#00ff00"/>
<rect x="666" y="234" width="1" height="26" fill="#00c400"/>
<rect x="110" y="260" width="1" height="25" fill="#8ce4f4"/>
<rect x="126" y="260" width="1" height="25" fill="#14bcee"/>
<rect x="133" y="260" width="1" height="25" fill="#8ce4f4"/>
<rect x="141" y="260" width="1" height="25" fill="#14bcee"/>
<rect x="149" y="260" width="1" height="25" fill="#8ce4f4"/>
<rect x="157" y="260" width="1" height="25" fill="#14bcee"/>
<rect x="172" y="260" width="1" height="25" fill="#8ce4f4"/>
<rect x="180" y="260" width="1" height="25" fill="#14bcee"/>
<rect x="196" y="260" width="1" height="25" fill="#8ce4f4"/>
<rect x="204" y="260" width="1" height="25" fill="#14bcee"/>
<rect x="219" y="260" width="1" height="25" fill="#8ce4f4"/>
<rect x="227" y="260" width="1" height="25" fill="#14bcee"/>
<rect x="235" y="260" width="1" height="25" fill="#8ce4f4"/>
<rect x="243" y="260" width="1" height="25" fill="#14bcee"/>
<rect x="251" y="260" width="1" height="25" fill="#8ce4f4"/>
<rect x="266" y="260" width="1" height="25" fill="#14bcee"/>
<rect x="274" y="260" width="1" height="25" fill="#8ce4f4"/>
<rect x="282" y="260" width="1" height="25" fill="#14bcee"/>
<rect x="290" y="260" width="1" height="25" fill="#8ce4f4"/>
<rect x="298" y="260" width="1" height="25" fill="#14bcee"/>
<rect x="313" y="260" width="1" height="25" fill="#8ce4f4"/>
<rect x="321" y="260" width="1" height="25" fill="#14bcee"/>
<rect x="329" y="260" width="1" height="25" fill="#8ce4f4"/>
<rect x="337" y="260" width="1" height="25" fill="#14bcee"/>
<rect x="345" y="260" width="1" height="25" fill="#8ce4f4"/>
<rect x="360" y="260" width="1" height="25" fill="#14bcee"/>
<rect x="368" y="260" width="1" height="25" fill="#8ce4f4"/>
<rect x="384" y="260" width="1" height="25" fill="#14bcee"/>
<rect x="392" y="260" width="1" height="25" fill="#8ce4f4"/>
<rect x="407" y="260" width="1" height="25" fill="#14bcee"/>
<rect x="415" y="260" width="1" height="25" fill="#8ce4f4"/>
<rect x="423" y="260" width="1" height="25" fill="#14bcee"/>
<rect x="431" y="260" width="1" height="25" fill="#8ce4f4"/>
<rect x="438" y="260" width="1" height="25" fill="#14bcee"/>
<rect x="454" y="260" width="1" height="25" fill="#8ce4f4"/>
<rect x="462" y="260" width="1" height="25" fill="#14bcee"/>
<rect x="470" y="260" width="1" height="25" fill="#8ce4f4"/>
<rect x="478" y="260" width="1" height="25" fill="#14bcee"/>
<rect x="485" y="260" width="1" height="25" fill="#8ce4f4"/>
<rect x="501" y="260" width="1" height="25" fill="#14bcee"/>
<rect x="509" y="260" width="1" height="25" fill="#8ce4f4"/>
<rect x="517" y="260" width="1" height="25" fill="#14bcee"/>
<rect x="525" y="260" width="1" height="25" fill="#8ce4f4"/>
<rect x="532" y="260" width="1" height="25" fill="#14bcee"/>
<rect x="548" y="260" width="1" height="25" fill="#8ce4f4"/>
<rect x="556" y="260" width="1" height="25" fill="#14bcee"/>
<rect x="571" y="260" width="1" height="25" fill="#8ce4f4"/>
<rect x="579" y="260" width="1" height="25" fill="#14bcee"/>
<rect x="595" y="260" width="1" height="25" fill="#8ce4f4"/>
<rect x="603" y="260" width="1" height="25" fill="#14bcee"/>
<rect x="611" y="260" width="1" height="25" fill="#8ce4f4"/>
<rect x="618" y="260" width="1" height="25" fill="#14bcee"/>
<rect x="626" y="260" width="1" height="25" fill="#8ce4f4"/>
<rect x="642" y="260" width="1" height="25" fill="#14bcee"/>
<rect x="650" y="260" width="1" height="25" fill="#8ce4f4"/>
<rect x="658" y="260" width="1" height="25" fill="#14bcee"/>
<rect x="665" y="260" width="1" height="25" fill="#8ce4f4"/>
<rect x="187" y="285" width="1" height="26" fill="#8ce4f4"/>
<rect x="374" y="285" width="1" height="26" fill="#14bcee"/>
<rect x="562" y="285" width="1" height="26" fill="#8ce4f4"/>
<rect x="108" y="311" width="1" height="25" fill="#ffff00"/>
<rect x="109" y="311" width="1" height="25" fill="#ffff00"/>
<rect x="111" y="311" width="1" height="25" fill="#d0d000"/>
<rect x="113" y="311" width="1" height="25" fill="#ffff00"/>
<rect x="114" y="311" width="1" height="25" fill="#ffff00"/>
<rect x="118" y="311" width="1" height="25" fill="#ffff00"/>
<rect x="119" y="311" width="1" height="25" fill="#ffff00"/>
<rect x="121" y="311" width="1" height="25" fill="#ffff00"/>
<rect x="123" y="311" width="1" height="25" fill="#ffff00"/>
<rect x="124" y="311" width="1" height="25" fill="#ffff00"/>
<rect x="126" y="311" width="1" height="25" fill="#ffff00"/>
<rect x="127" y="311" width="1" height="25" fill="#ffff00"/>
<rect x="129" y="311" width="1" height="25" fill="#d0d000"/>
<rect x="131" y="311" width="1" height="25" fill="#ffff00"/>
<rect x="132" y="311" width="1" height="25" fill="#ffff00"/>
<rect x="134" y="311" width="1" height="25" fill="#ffff00"/>
<rect x="135" y="311" width="1" height="25" fill="#ffff00"/>
<rect x="137" y="311" width="1" height="25" fill="#ffff00"/>
<rect x="139" y="311" width="1" height="25" fill="#ffff00"/>
<rect x="140" y="311" width="1" height="25" fill="#ffff00"/>
<rect x="142" y="311" width="1" height="25" fill="#d0d000"/>
<rect x="144" y="311" width="1" height="25" fill="#ffff00"/>
<rect x="145" y="311" width="1" height="25" fill="#ffff00"/>
<rect x="147" y="311" width="1" height="25" fill="#ffff00"/>
<rect x="148" y="311" width="1" height="25" fill="#ffff00"/>
<rect x="150" y="311" width="1" height="25" fill="#ffff00"/>
<rect x="152" y="311" width="1" height="25" fill="#ffff00"/>
<rect x="153" y="311" width="1" height="25" fill="#ffff00"/>
<rect x="155" y="311" width="1" height="25" fill="#ffff00"/>
<rect x="156" y="311" width="1" height="25" fill="#ffff00"/>
<rect x="158" y="311" width="1" height="25" fill="#d0d000"/>
<rect x="160" y="311" width="1" height="25" fill="#ffff00"/>
<rect x="161" y="311" width="1" height="25" fill="#ffff00"/>
<rect x="165" y="311" width="1" height="25" fill="#ffff00"/>
<rect x="166" y="311" width="1" height="25" fill="#ffff00"/>
<rect x="168" y="311" width="1" height="25" fill="#ffff00"/>
<rect x="170" y="311" width="1" height="25" fill="#ffff00"/>
<rect x="171" y="311" width="1" height="25" fill="#ffff00"/>
<rect x="173" y="311" width="1" height="25" fill="#ffff00"/>
<rect x="174" y="311" width="1" height="25" fill="#ffff00"/>
<rect x="176" y="311" width="1" height="25" fill="#d0d000"/>
<rect x="178" y="311" width="1" height="25" fill="#ffff00"/>
<rect x="179" y="311" width="1" height="25" fill="#ffff00"/>
<rect x="181" y="311" width="1" height="25" fill="#ffff00"/>
<rect x="182" y="311" width="1" height="25" fill="#ffff00"/>
<rect x="184" y="311" width="1" height="25" fill="#ffff00"/>
<rect x="186" y="311" width="1" height="25" fill="#ffff00"/>
<rect x="187" y="311" width="1" height="25" fill="#ffff00"/>
<rect x="189" y="311" width="1" height="25" fill="#d0d000"/>
<rect x="191" y="311" width="1" height="25" fill="#ffff00"/>
<rect x="192" y="311" width="1" height="25" fill="#ffff00"/>
<rect x="194" y="311" width="1" height="25" fill="#ffff00"/>
<rect x="195" y="311" width="1" height="25" fill="#ffff00"/>
<rect x="197" y="311" width="1" height="25" fill="#ffff00"/>
<rect x="199" y="311" width="1" height="25" fill="#ffff00"/>
<rect x="200" y="311" width="1" height="25" fill="#ffff00"/>
<rect x="202" y="311" width="1" height="25" fill="#ffff00"/>
<rect x="203" y="311" width="1" height="25" fill="#ffff00"/>
<rect x="205" y="311" width="1" height="25" fill="#d0d000"/>
<rect x="207" y="311" width="1" height="25" fill="#ffff00"/>
<rect x="208" y="311" width="1" height="25" fill="#ffff00"/>
<rect x="212" y="311" width="1" height="25" fill="#ffff00"/>
<rect x="213" y="311" width="1" height="25" fill="#ffff00"/>
<rect x="215" y="311" width="1" height="25" fill="#ffff00"/>
<rect x="217" y="311" width="1" height="25" fill="#ffff00"/>
<rect x="218" y="311" width="1" height="25" fill="#ffff00"/>
<rect x="220" y="311" width="1" height="25" fill="#ffff00"/>
<rect x="221" y="311" width="1" height="25" fill="#ffff00"/>
<rect x="223" y="311" width="1" height="25" fill="#d0d000"/>
<rect x="225" y="311" width="1" height="25" fill="#ffff00"/>
<rect x="226" y="311" width="1" height="25" fill="#ffff00"/>
<rect x="228" y="311" width="1" height="25" fill="#ffff00"/>
<rect x="229" y="311" width="1" height="25" fill="#ffff00"/>
<rect x="231" y="311" width="1" height="25" fill="#ffff00"/>
<rect x="233" y="311" width="1" height="25" fill="#ffff00"/>
<rect x="234" y="311" width="1" height="25" fill="#ffff00"/>
<rect x="236" y="311" width="1" height="25" fill="#d0d000"/>
<rect x="238" y="311" width="1" height="25" fill="#ffff00"/>
<rect x="239" y="311" width="1" height="25" fill="#ffff00"/>
<rect x="241" y="311" width="1" height="25" fill="#ffff00"/>
<rect x="242" y="311" width="1" height="25" fill="#ffff00"/>
<rect x="244" y="311" width="1" height="25" fill="#ffff00"/>
<rect x="246" y="311" width="1" height="25" fill="#ffff00"/>
<rect x="247" y="311" width="1" height="25" fill="#ffff00"/>
<rect x="249" y="311" width="1" height="25" fill="#ffff00"/>
<rect x="250" y="311" width="1" height="25" fill="#ffff00"/>
<rect x="252" y="311" width="1" height="25" fill="#d0d000"/>
<rect x="254" y="311" width="1" height="25" fill="#ffff00"/>
<rect x="255" y="311" width="1" height="25" fill="#ffff00"/>
<rect x="259" y="311" width="1" height="25" fill="#ffff00"/>
<rect x="260" y="311" width="1" height="25" fill="#ffff00"/>
<rect x="262" y="311" width="1" height="25" fill="#ffff00"/>
<rect x="264" y="311" width="1" height="25" fill="#ffff00"/>
<rect x="265" y="311" width="1" height="25" fill="#ffff00"/>
<rect x="267" y="311" width="1" height="25" fill="#ffff00"/>
<rect x="268" y="311" width="1" height="25" fill="#ffff00"/>
<rect x="270" y="311" width="1" height="25" fill="#d0d000"/>
<rect x="272" y="311" width="1" height="25" fill="#ffff00"/>
<rect x="273" y="311" width="1" height="25" fill="#ffff00"/>
<rect x="275" y="311" width="1" height="25" fill="#ffff00"/>
<rect x="276" y="311" width="1" height="25" fill="#ffff00"/>
<rect x="278" y="311" width="1" height="25" fill="#ffff00"/>
<rect x="280" y="311" width="1" height="25" fill="#ffff00"/>
<rect x="281" y="311" width="1" height="25" fill="#ffff00"/>
<rect x="283" y="311" width="1" height="25" fill="#d0d000"/>
<rect x="285" y="311" width="1" height="25" fill="#ffff00"/>
<rect x="286" y="311" width="1" height="25" fill="#ffff00"/>
<rect x="288" y="311" width="1" height="25" fill="#ffff00"/>
<rect x="289" y="311" width="1" height="25" fill="#ffff00"/>
<rect x="291" y="311" width="1" height="25" fill="#ffff00"/>
<rect x="293" y="311" width="1" height="25" fill="#ffff00"/>
<rect x="294" y="311" width="1" height="25" fill="#ffff00"/>
<rect x="296" y="311" width="1" height="25" fill="#ffff00"/>
<rect x="297" y="311" width="1" height="25" fill="#ffff00"/>
<rect x="299" y="311" width="1" height="25" fill="#d0d000"/>
<rect x="301" y="311" width="1" height="25" fill="#ffff00"/>
<rect x="302" y="311" width="1" height="25" fill="#ffff00"/>
<rect x="306" y="311" width="1" height="25" fill="#ffff00"/>
<rect x="307" y="311" width="1" height="25" fill="#ffff00"/>
<rect x="309" y="311" width="1" height="25" fill="#ffff00"/>
<rect x="311" y="311" width="1" height="25" fill="#ffff00"/>
<rect x="312" y="311" width="1" height="25" fill="#ffff00"/>
<rect x="314" y="311" width="1" height="25" fill="#ffff00"/>
<rect x="315" y="311" width="1" height="25" fill="#ffff00"/>
<rect x="317" y="311" width="1" height="25" fill="#d0d000"/>
<rect x="319" y="311" width="1" height="25" fill="#ffff00"/>
<rect x="320" y="311" width="1" height="25" fill="#ffff00"/>
<rect x="322" y="311" width="1" height="25" fill="#ffff00"/>
<rect x="323" y="311" width="1" height="25" fill="#ffff00"/>
<rect x="325" y="311" width="1" height="25" fill="#ffff00"/>
<rect x="327" y="311" width="1" height="25" fill="#ffff00"/>
<rect x="328" y="311" width="1" height="25" fill="#ffff00"/>
<rect x="330" y="311" width="1" height="25" fill="#d0d000"/>
<rect x="332" y="311" width="1" height="25" fill="#ffff00"/>
<rect x="333" y="311" width="1" height="25" fill="#ffff00"/>
<rect x="335" y="311" width="1" height="25" fill="#ffff00"/>
<rect x="336" y="311" width="1" height="25" fill="#ffff00"/>
<rect x="338" y="311" width="1" height="25" fill="#ffff00"/>
<rect x="340" y="311" width="1" height="25" fill="#ffff00"/>
<rect x="341" y="311" width="1" height="25" fill="#ffff00"/>
<rect x="343" y="311" width="1" height="25" fill="#ffff00"/>
<rect x="344" y="311" width="1" height="25" fill="#ffff00"/>
<rect x="346" y="311" width="1" height="25" fill="#d0d000"/>
<rect x="348" y="311" width="1" height="25" fill="#ffff00"/>
<rect x="349" y="311" width="1" height="25" fill="#ffff00"/>
<rect x="353" y="311" width="1" height="25" fill="#ffff00"/>
<rect x="354" y="311" width="1" height="25" fill="#ffff00"/>
<rect x="356" y="311" width="1" height="25" fill="#ffff00"/>
<rect x="358" y="311" width="1" height="25" fill="#ffff00"/>
<rect x="359" y="311" width="1" height="25" fill="#ffff00"/>
<rect x="361" y="311" width="1" height="25" fill="#ffff00"/>
<rect x="362" y="311" width="1" height="25" fill="#ffff00"/>
<rect x="364" y="311" width="1" height="25" fill="#d0d000"/>
<rect x="366" y="311" width="1" height="25" fill="#ffff00"/>
<rect x="367" y="311" width="1" height="25" fill="#ffff00"/>
<rect x="369" y="311" width="1" height="25" fill="#ffff00"/>
<rect x="370" y="311" width="1" height="25" fill="#ffff00"/>
<rect x="372" y="311" width="1" height="25" fill="#ffff00"/>
<rect x="374" y="311" width="1" height="25" fill="#ffff00"/>
<rect x="375" y="311" width="1" height="25" fill="#ffff00"/>
<rect x="377" y="311" width="1" height="25" fill="#d0d000"/>
<rect x="379" y="311" width="1" height="25" fill="#ffff00"/>
<rect x="380" y="311" width="1" height="25" fill="#ffff00"/>
<rect x="382" y="311" width="1" height="25" fill="#ffff00"/>
<rect x="383" y="311" width="1" height="25" fill="#ffff00"/>
<rect x="385" y="311" width="1" height="25" fill="#ffff00"/>
<rect x="387" y="311" width="1" height="25" fill="#ffff00"/>
<rect x="388" y="311" width="1" height="25" fill="#ffff00"/>
<rect x="390" y="311" width="1" height="25" fill="#ffff00"/>
<rect x="391" y="311" width="1" height="25" fill="#ffff00"/>
<rect x="393" y="311" width="1" height="25" fill="#d0d000"/>
<rect x="395" y="311" width="1" height="25" fill="#ffff00"/>
<rect x="396" y="311" width="1" height="25" fill="#ffff00"/>
<rect x="400" y="311" width="1" height="25" fill="#ffff00"/>
<rect x="401" y="311" width="1" height="25" fill="#ffff00"/>
<rect x="403" y="311" width="1" height="25" fill="#ffff00"/>
<rect x="405" y="311" width="1" height="25" fill="#ffff00"/>
<rect x="406" y="311" width="1" height="25" fill="#ffff00"/>
<rect x="408" y="311" width="1" height="25" fill="#ffff00"/>
<rect x="409" y="311" width="1" height="25" fill="#ffff00"/>
<rect x="411" y="311" width="1" height="25" fill="#d0d000"/>
<rect x="413" y="311" width="1" height="25" fill="#ffff00"/>
<rect x="414" y="311" width="1" height="25" fill="#ffff00"/>
<rect x="416" y="311" width="1" height="25" fill="#ffff00"/>
<rect x="417" y="311" width="1" height="25" fill="#ffff00"/>
<rect x="419" y="311" width="1" height="25" fill="#ffff00"/>
<rect x="421" y="311" width="1" height="25" fill="#ffff00"/>
<rect x="422" y="311" width="1" height="25" fill="#ffff00"/>
<rect x="424" y="311" width="1" height="25" fill="#d0d000"/>
<rect x="426" y="311" width="1" height="25" fill="#ffff00"/>
<rect x="427" y="311" width="1" height="25" fill="#ffff00"/>
<rect x="429" y="311" width="1" height="25" fill="#ffff00"/>
<rect x="430" y="311" width="1" height="25" fill="#ffff00"/>
<rect x="432" y="311" width="1" height="25" fill="#ffff00"/>
<rect x="434" y="311" width="1" height="25" fill="#ffff00"/>
<rect x="435" y="311" width="1" height="25" fill="#ffff00"/>
<rect x="437" y="311" width="1" height="25" fill="#ffff00"/>
<rect x="438" y="311" width="1" height="25" fill="#ffff00"/>
<rect x="440" y="311" width="1" height="25" fill="#d0d000"/>
<rect x="442" y="311" width="1" height="25" fill="#ffff00"/>
<rect x="443" y="311" width="1" height="25" fill="#ffff00"/>
<rect x="447" y="311" width="1" height="25" fill="#ffff00"/>
<rect x="448" y="311" width="1" height="25" fill="#ffff00"/>
<rect x="450" y="311" width="1" height="25" fill="#ffff00"/>
<rect x="452" y="311" width="1" height="25" fill="#ffff00"/>
<rect x="453" y="311" width="1" height="25" fill="#ffff00"/>
<rect x="455" y="311" width="1" height="25" fill="#ffff00"/>
<rect x="456" y="311" width="1" height="25" fill="#ffff00"/>
<rect x="458" y="311" width="1" height="25" fill="#d0d000"/>
<rect x="460" y="311" width="1" height="25" fill="#ffff00"/>
<rect x="461" y="311" width="1" height="25" fill="#ffff00"/>
<rect x="463" y="311" width="1" height="25" fill="#ffff00"/>
<rect x="464" y="311" width="1" height="25" fill="#ffff00"/>
<rect x="466" y="311" width="1" height="25" fill="#ffff00"/>
<rect x="468" y="311" width="1" height="25" fill="#ffff00"/>
<rect x="469" y="311" width="1" height="25" fill="#ffff00"/>
<rect x="471" y="311" width="1" height="25" fill="#d0d000"/>
<rect x="473" y="311" width="1" height="25" fill="#ffff00"/>
<rect x="477" y="311" width="1" height="25" fill="#ffff00"/>
<rect x="479" y="311" width="1" height="25" fill="#ffff00"/>
<rect x="481" y="311" width="1" height="25" fill="#ffff00"/>
<rect x="482" y="311" width="1" height="25" fill="#ffff00"/>
<rect x="484" y="311" width="1" height="25" fill="#ffff00"/>
<rect x="485" y="311" width="1" height="25" fill="#ffff00"/>
<rect x="487" y="311" width="1" height="25" fill="#d0d000"/>
<rect x="489" y="311" width="1" height="25" fill="#ffff00"/>
<rect x="490" y="311" width="1" height="25" fill="#ffff00"/>
<rect x="494" y="311" width="1" height="25" fill="#ffff00"/>
<rect x="495" y="311" width="1" height="25" fill="#ffff00"/>
<rect x="497" y="311" width="1" height="25" fill="#ffff00"/>
<rect x="499" y="311" width="1" height="25" fill="#ffff00"/>
<rect x="500" y="311" width="1" height="25" fill="#ffff00"/>
<rect x="502" y="311" width="1" height="25" fill="#ffff00"/>
<rect x="503" y="311" width="1" height="25" fill="#ffff00"/>
<rect x="505" y="311" width="1" height="25" fill="#d0d000"/>
<rect x="507" y="311" width="1" height="25" fill="#ffff00"/>
<rect x="508" y="311" width="1" height="25" fill="#ffff00"/>
<rect x="510" y="311" width="1" height="25" fill="#ffff00"/>
<rect x="511" y="311" width="1" height="25" fill="#ffff00"/>
<rect x="513" y="311" width="1" height="25" fill="#ffff00"/>
<rect x="515" y="311" width="1" height="25" fill="#ffff00"/>
<rect x="516" y="311" width="1" height="25" fill="#ffff00"/>
<rect x="518" y="311" width="1" height="25" fill="#d0d000"/>
<rect x="520" y="311" width="1" height="25" fill="#ffff00"/>
<rect x="521" y="311" width="1" height="25" fill="#ffff00"/>
<rect x="523" y="311" width="1" height="25" fill="#ffff00"/>
<rect x="524" y="311" width="1" height="25" fill="#ffff00"/>
<rect x="526" y="311" width="1" height="25" fill="#ffff00"/>
<rect x="528" y="311" width="1" height="25" fill="#ffff00"/>
<rect x="529" y="311" width="1" height="25" fill="#ffff00"/>
<rect x="531" y="311" width="1" height="25" fill="#ffff00"/>
<rect x="532" y="311" width="1" height="25" fill="#ffff00"/>
<rect x="534" y="311" width="1" height="25" fill="#d0d000"/>
<rect x="536" y="311" width="1" height="25" fill="#ffff00"/>
<rect x="537" y="311" width="1" height="25" fill="#ffff00"/>
<rect x="541" y="311" width="1" height="25" fill="#ffff00"/>
<rect x="542" y="311" width="1" height="25" fill="#ffff00"/>
<rect x="544" y="311" width="1" height="25" fill="#ffff00"/>
<rect x="546" y="311" width="1" height="25" fill="#ffff00"/>
<rect x="547" y="311" width="1" height="25" fill="#ffff00"/>
<rect x="549" y="311" width="1" height="25" fill="#ffff00"/>
<rect x="550" y="311" width="1" height="25" fill="#ffff00"/>
<rect x="552" y="311" width="1" height="25" fill="#d0d000"/>
<rect x="554" y="311" width="1" height="25" fill="#ffff00"/>
<rect x="555" y="311" width="1" height="25" fill="#ffff00"/>
<rect x="557" y="311" width="1" height="25" fill="#ffff00"/>
<rect x="558" y="311" width="1" height="25" fill="#ffff00"/>
<rect x="560" y="311" width="1" height="25" fill="#ffff00"/>
<rect x="562" y="311" width="1" height="25" fill="#ffff00"/>
<rect x="563" y="311" width="1" height="25" fill="#ffff00"/>
<rect x="565" y="311" width="1" height="25" fill="#d0d000"/>
<rect x="567" y="311" width="1" height="25" fill="#ffff00"/>
<rect x="568" y="311" width="1" height="25" fill="#ffff00"/>
<rect x="570" y="311" width="1" height="25" fill="#ffff00"/>
<rect x="571" y="311" width="1" height="25" fill="#ffff00"/>
<rect x="573" y="311" width="1" height="25" fill="#ffff00"/>
<rect x="575" y="311" width="1" height="25" fill="#ffff00"/>
<rect x="576" y="311" width="1" height="25" fill="#ffff00"/>
<rect x="578" y="311" width="1" height="25" fill="#ffff00"/>
<rect x="579" y="311" width="1" height="25" fill="#ffff00"/>
<rect x="581" y="311" width="1" height="25" fill="#d0d000"/>
<rect x="583" y="311" width="1" height="25" fill="#ffff00"/>
<rect x="584" y="311" width="1" height="25" fill="#ffff00"/>
<rect x="588" y="311" width="1" height="25" fill="#ffff00"/>
<rect x="589" y="311" width="1" height="25" fill="#ffff00"/>
<rect x="591" y="311" width="1" height="25" fill="#ffff00"/>
<rect x="593" y="311" width="1" height="25" fill="#ffff00"/>
<rect x="594" y="311" width="1" height="25" fill="#ffff00"/>
<rect x="596" y="311" width="1" height="25" fill="#ffff00"/>
<rect x="597" y="311" width="1" height="25" fill="#ffff00"/>
<rect x="599" y="311" width="1" height="25" fill="#d0d000"/>
<rect x="601" y="311" width="1" height="25" fill="#ffff00"/>
<rect x="602" y="311" width="1" height="25" fill="#ffff00"/>
<rect x="604" y="311" width="1" height="25" fill="#ffff00"/>
<rect x="605" y="311" width="1" height="25" fill="#ffff00"/>
<rect x="607" y="311" width="1" height="25" fill="#ffff00"/>
<rect x="609" y="311" width="1" height="25" fill="#ffff00"/>
<rect x="610" y="311" width="1" height="25" fill="#ffff00"/>
<rect x="612" y="311" width="1" height="25" fill="#d0d000"/>
<rect x="614" y="311" width="1" height="25" fill="#ffff00"/>
<rect x="615" y="311" width="1" height="25" fill="#ffff00"/>
<rect x="617" y="311" width="1" height="25" fill="#ffff00"/>
<rect x="618" y="311" width="1" height="25" fill="#ffff00"/>
<rect x="620" y="311" width="1" height="25" fill="#ffff00"/>
<rect x="622" y="311" width="1" height="25" fill="#ffff00"/>
<rect x="623" y="311" width="1" height="25" fill="#ffff00"/>
<rect x="625" y="311" width="1" height="25" fill="#ffff00"/>
<rect x="626" y="311" width="1" height="25" fill="#ffff00"/>
<rect x="628" y="311" width="1" height="25" fill="#d0d000"/>
<rect x="630" y="311" width="1" height="25" fill="#ffff00"/>
<rect x="631" y="311" width="1" height="25" fill="#ffff00"/>
<rect x="635" y="311" width="1" height="25" fill="#ffff00"/>
<rect x="636" y="311" width="1" height="25" fill="#ffff00"/>
<rect x="638" y="311" width="1" height="25" fill="#ffff00"/>
<rect x="640" y="311" width="1" height="25" fill="#ffff00"/>
<rect x="641" y="311" width="1" height="25" fill="#ffff00"/>
<rect x="643" y="311" width="1" height="25" fill="#ffff00"/>
<rect x="644" y="311" width="1" height="25" fill="#ffff00"/>
<rect x="646" y="311" width="1" height="25" fill="#d0d000"/>
<rect x="648" y="311" width="1" height="25" fill="#ffff00"/>
<rect x="649" y="311" width="1" height="25" fill="#ffff00"/>
<rect x="651" y="311" width="1" height="25" fill="#ffff00"/>
<rect x="652" y="311" width="1" height="25" fill="#ffff00"/>
<rect x="654" y="311" width="1" height="25" fill="#ffff00"/>
<rect x="656" y="311" width="1" height="25" fill="#ffff00"/>
<rect x="657" y="311" width="1" height="25" fill="#ffff00"/>
<rect x="659" y="311" width="1" height="25" fill="#d0d000"/>
<rect x="661" y="311" width="1" height="25" fill="#ffff00"/>
<rect x="662" y="311" width="1" height="25" fill="#ffff00"/>
<rect x="664" y="311" width="1" height="25" fill="#ffff00"/>
<rect x="665" y="311" width="1" height="25" fill="#ffff00"/>
<rect x="667" y="311" width="1" height="25" fill="#ffff00"/>
<rect x="669" y="311" width="1" height="25" fill="#ffff00"/>
<rect x="670" y="311" width="1" height="25" fill="#ffff00"/>
<rect x="285" y="336" width="3" height="26" fill="#8ce4f4"/>
<rect x="473" y="336" width="3" height="26" fill="#14bcee"/>
<rect x="661" y="336" width="2" height="26" fill="#8ce4f4"/>
<rect x="458" y="362" width="1" height="26" fill="#00ff00"/>
<rect x="473" y="388" width="1" height="25" fill="#8ce4f4"/>
<rect x="114" y="427" width="1" height="1" fill="#fff"/>
<rect x="120" y="427" width="1" height="1" fill="#fff"/>
<rect x="126" y="427" width="1" height="1" fill="#fff"/>
<rect x="132" y="427" width="1" height="1" fill="#fff"/>
<rect x="138" y="427" width="1" height="1" fill="#fff"/>
<rect x="144" y="427" width="1" height="1" fill="#fff"/>
<rect x="150" y="427" width="1" height="1" fill="#fff"/>
<rect x="156" y="427" width="1" height="1" fill="#fff"/>
<rect x="162" y="427" width="1" height="1" fill="#fff"/>
<rect x="168" y="427" width="1" height="1" fill="#fff"/>
<rect x="174" y="427" width="1" height="1" fill="#fff"/>
<rect x="180" y="427" width="1" height="1" fill="#fff"/>
<rect x="186" y="427" width="1" height="1" fill="#fff"/>
<rect x="192" y="427" width="1" height="1" fill="#fff"/>
<rect x="198" y="427" width="1" height="1" fill="#fff"/>
<rect x="204" y="427" width="1" height="1" fill="#fff"/>
<rect x="210" y="427" width="1" height="1" fill="#fff"/>
<rect x="216" y="427" width="1" height="1" fill="#fff"/>
<rect x="222" y="427" width="1" height="1" fill="#fff"/>
<rect x="228" y="427" width="1" height="1" fill="#fff"/>
<rect x="234" y="427" width="1" height="1" fill="#fff"/>
<rect x="240" y="427" width="1" height="1" fill="#fff"/>
<rect x="246" y="427" width="1" height="1" fill="#fff"/>
<rect x="252" y="427" width="1" height="1" fill="#fff"/>
<rect x="258" y="427" width="1" height="1" fill="#fff"/>
<rect x="264" y="427" width="1" height="1" fill="#fff"/>
<rect x="270" y="427" width="1" height="1" fill="#fff"/>
<rect x="276" y="427" width="1" height="1" fill="#fff"/>
<rect x="282" y="427" width="1" height="1" fill="#fff"/>
<rect x="288" y="427" width="1" height="1" fill="#fff"/>
<rect x="294" y="427" width="1" height="1" fill="#fff"/>
<rect x="300" y="427" width="1" height="1" fill="#fff"/>
<rect x="306" y="427" width="1" height="1" fill="#fff"/>
<rect x="312" y="427" width="1" height="1" fill="#fff"/>
<rect x="318" y="427" width="1" height="1" fill="#fff"/>
<rect x="324" y="427" width="1" height="1" fill="#fff"/>
<rect x="330" y="427" width="1" height="1" fill="#fff"/>
<rect x="336" y="427" width="1" height="1" fill="#fff"/>
<rect x="342" y="427" width="1" height="1" fill="#fff"/>
<rect x="348" y="427" width="1" height="1" fill="#fff"/>
<rect x="354" y="427" width="1" height="1" fill="#fff"/>
<rect x="360" y="427" width="1" height="1" fill="#fff"/>
<rect x="366" y="427" width="1" height="1" fill="#fff"/>
<rect x="372" y="427" width="1" height="1" fill="#fff"/>
<rect x="378" y="427" width="1" height="1" fill="#fff"/>
<rect x="384" y="427" width="1" height="1" fill="#fff"/>
<rect x="390" y="427" width="1" height="1" fill="#fff"/>
<rect x="396" y="427" width="1" height="1" fill="#fff"/>
<rect x="402" y="427" width="1" height="1" fill="#fff"/>
<rect x="408" y="427" width="1" height="1" fill="#fff"/>
<rect x="414" y="427" width="1" height="1" fill="#fff"/>
<rect x="420" y="427" width="1" height="1" fill="#fff"/>
<rect x="426" y="427" width="1" height="1" fill="#fff"/>
<rect x="432" y="427" width="1" height="1" fill="#fff"/>
<rect x="438" y="427" width="1" height="1" fill="#fff"/>
<rect x="444" y="427" width="1" height="1" fill="#fff"/>
<rect x="450" y="427" width="1" height="1" fill="#fff"/>
<rect x="456" y="427" width="1" height="1" fill="#fff"/>
<rect x="462" y="427" width="1" height="1" fill="#fff"/>
<rect x="468" y="427" width="1" height="1" fill="#fff"/>
<rect x="474" y="427" width="1" height="1" fill="#fff"/>
<rect x="480" y="427" width="1" height="1" fill="#fff"/>
<rect x="486" y="427" width="1" height="1" fill="#fff"/>
<rect x="492" y="427" width="1" height="1" fill="#fff"/>
<rect x="498" y="427" width="1" height="1" fill="#fff"/>
<rect x="504" y="427" width="1" height="1" fill="#fff"/>
<rect x="510" y="427" width="1" height="1" fill="#fff"/>
<rect x="516" y="427" width="1" height="1" fill="#fff"/>
<rect x="522" y="427" width="1" height="1" fill="#fff"/>
<rect x="528" y="427" width="1" height="1" fill="#fff"/>
<rect x="534" y="427" width="1" height="1" fill="#fff"/>
<rect x="540" y="427" width="1" height="1" fill="#fff"/>
<rect x="546" y="427" width="1" height="1" fill="#fff"/>
<rect x="552" y="427" width="1" height="1" fill="#fff"/>
<rect x="558" y="427" width="1" height="1" fill="#fff"/>
<rect x="564" y="427" width="1" height="1" fill="#fff"/>
<rect x="570" y="427" width="1" height="1" fill="#fff"/>
<rect x="576" y="427" width="1" height="1" fill="#fff"/>
<rect x="582" y="427" width="1" height="1" fill="#fff"/>
<rect x="588" y="427" width="1" height="1" fill="#fff"/>
<rect x="594" y="427" width="1" height="1" fill="#fff"/>
<rect x="600" y="427" width="1" height="1" fill="#fff"/>
<rect x="606" y="427" width="1" height="1" fill="#fff"/>
<rect x="612" y="427" width="1" height="1" fill="#fff"/>
<rect x="618" y="427" width="1" height="1" fill="#fff"/>
<rect x="624" y="427" width="1" height="1" fill="#fff"/>
<rect x="630" y="427" width="1" height="1" fill="#fff"/>
<rect x="636" y="427" width="1" height="1" fill="#fff"/>
<rect x="642" y="427" width="1" height="1" fill="#fff"/>
<rect x="648" y="427" width="1" height="1" fill="#fff"/>
<rect x="654" y="427" width="1" height="1" fill="#fff"/>
<rect x="660" y="427" width="1" height="1" fill="#fff"/>
<rect x="666" y="427" width="1" height="1" fill="#fff"/>
<rect x="114" y="439" width="1" height="1" fill="#fff"/>
<rect x="120" y="439" width="1" height="1" fill="#fff"/>
<rect x="126" y="439" width="1" height="1" fill="#fff"/>
<rect x="132" y="439" width="1" height="1" fill="#fff"/>
<rect x="138" y="439" width="1" height="1" fill="#fff"/>
<rect x="144" y="439" width="1" height="1" fill="#fff"/>
<rect x="150" y="439" width="1" height="1" fill="#fff"/>
<rect x="156" y="439" width="1" height="1" fill="#fff"/>
<rect x="162" y="439" width="1" height="1" fill="#fff"/>
<rect x="168" y="439" width="1" height="1" fill="#fff"/>
<rect x="174" y="439" width="1" height="1" fill="#fff"/>
<rect x="180" y="439" width="1" height="1" fill="#fff"/>
<rect x="186" y="439" width="1" height="1" fill="#fff"/>
<rect x="192" y="439" width="1" height="1" fill="#fff"/>
<rect x="198" y="439" width="1" height="1" fill="#fff"/>
<rect x="204" y="439" width="1" height="1" fill="#fff"/>
<rect x="210" y="439" width="1" height="1" fill="#fff"/>
<rect x="216" y="439" width="1" height="1" fill="#fff"/>
<rect x="222" y="439" width="1" height="1" fill="#fff"/>
<rect x="228" y="439" width="1" height="1" fill="#fff"/>
<rect x="234" y="439" width="1" height="1" fill="#fff"/>
<rect x="240" y="439" width="1" height="1" fill="#fff"/>
<rect x="246" y="439" width="1" height="1" fill="#fff"/>
<rect x="252" y="439" width="1" height="1" fill="#fff"/>
<rect x="258" y="439" width="1" height="1" fill="#fff"/>
<rect x="264" y="439" width="1" height="1" fill="#fff"/>
<rect x="270" y="439" width="1" height="1" fill="#fff"/>
<rect x="276" y="439" width="1" height="1" fill="#fff"/>
<rect x="282" y="439" width="1" height="1" fill="#fff"/>
<rect x="288" y="439" width="1" height="1" fill="#fff"/>
<rect x="294" y="439" width="1" height="1" fill="#fff"/>
<rect x="300" y="439" width="1" height="1" fill="#fff"/>
<rect x="306" y="439" width="1" height="1" fill="#fff"/>
<rect x="312" y="439" width="1" height="1" fill="#fff"/>
<rect x="318" y="439" width="1" height="1" fill="#fff"/>
<rect x="324" y="439" width="1" height="1" fill="#fff"/>
<rect x="330" y="439" width="1" height="1" fill="#fff"/>
<rect x="336" y="439" width="1" height="1" fill="#fff"/>
<rect x="342" y="439" width="1" height="1" fill="#fff"/>
<rect x="348" y="439" width="1" height="1" fill="#fff"/>
<rect x="354" y="439" width="1" height="1" fill="#fff"/>
<rect x="360" y="439" width="1" height="1" fill="#fff"/>
<rect x="366" y="439" width="1" height="1" fill="#fff"/>
<rect x="372" y="439" width="1" height="1" fill="#fff"/>
<rect x="378" y="439" width="1" height="1" fill="#fff"/>
<rect x="384" y="439" width="1" height="1" fill="#fff"/>
<rect x="390" y="439" width="1" height="1" fill="#fff"/>
<rect x="396" y="439" width="1" height="1" fill="#fff"/>
<rect x="402" y="439" width="1" height="1" fill="#fff"/>
<rect x="408" y="439" width="1" height="1" fill="#fff"/>
<rect x="414" y="439" width="1" height="1" fill="#fff"/>
<rect x="420" y="439" width="1" height="1" fill="#fff"/>
<rect x="426" y="439" width="1" height="1" fill="#fff"/>
<rect x="432" y="439" width="1" height="1" fill="#fff"/>
<rect x="438" y="439" width="1" height="1" fill="#fff"/>
<rect x="444" y="439" width="1" height="1" fill="#fff"/>
<rect x="450" y="439" width="1" height="1" fill="#fff"/>
<rect x="456" y="439" width="1" height="1" fill="#fff"/>
<rect x="462" y="439" width="1" height="1" fill="#fff"/>
<rect x="468" y="439" width="1" height="1" fill="#fff"/>
<rect x="474" y="439" width="1" height="1" fill="#fff"/>
<rect x="480" y="439" width="1" height="1" fill="#fff"/>
<rect x="486" y="439" width="1" height="1" fill="#fff"/>
<rect x="492" y="439" width="1" height="1" fill="#fff"/>
<rect x="498" y="439" width="1" height="1" fill="#fff"/>
<rect x="504" y="439" width="1" height="1" fill="#fff"/>
<rect x="510" y="439" width="1" height="1" fill="#fff"/>
<rect x="516" y="439" width="1" height="1" fill="#fff"/>
<rect x="522" y="439" width="1" height="1" fill="#fff"/>
<rect x="528" y="439" width="1" height="1" fill="#fff"/>
<rect x="534" y="439" width="1" height="1" fill="#fff"/>
<rect x="540" y="439" width="1" height="1" fill="#fff"/>
<rect x="546" y="439" width="1" height="1" fill="#fff"/>
<rect x="552" y="439" width="1" height="1" fill="#fff"/>
<rect x="558" y="439" width="1" height="1" fill="#fff"/>
<rect x="564" y="439" width="1" height="1" fill="#fff"/>
<rect x="570" y="439" width="1" height="1" fill="#fff"/>
<rect x="576" y="439" width="1" height="1" fill="#fff"/>
<rect x="582" y="439" width="1" height="1" fill="#fff"/>
<rect x="588" y="439" width="1" height="1" fill="#fff"/>
<rect x="594" y="439" width="1" height="1" fill="#fff"/>
<rect x="600" y="439" width="1" height="1" fill="#fff"/>
<rect x="606" y="439" width="1" height="1" fill="#fff"/>
<rect x="612" y="439" width="1" height="1" fill="#fff"/>
<rect x="618" y="439" width="1" height="1" fill="#fff"/>
<rect x="624" y="439" width="1" height="1" fill="#fff"/>
<rect x="630" y="439" width="1" height="1" fill="#fff"/>
<rect x="636" y="439" width="1" height="1" fill="#fff"/>
<rect x="642" y="439" width="1" height="1" fill="#fff"/>
<rect x="648" y="439" width="1" height="1" fill="#fff"/>
<rect x="654" y="439" width="1" height="1" fill="#fff"/>
<rect x="660" y="439" width="1" height="1" fill="#fff"/>
<rect x="666" y="439" width="1" height="1" fill="#fff"/>
<rect x="114" y="472" width="1" height="1" fill="#fff"/>
<rect x="120" y="472" width="1" height="1" fill="#fff"/>
<rect x="126" y="472" width="1" height="1" fill="#fff"/>
<rect x="132" y="472" width="1" height="1" fill="#fff"/>
<rect x="138" y="472" width="1" height="1" fill="#fff"/>
<rect x="144" y="472" width="1" height="1" fill="#fff"/>
<rect x="150" y="472" width="1" height="1" fill="#fff"/>
<rect x="156" y="472" width="1" height="1" fill="#fff"/>
<rect x="162" y="472" width="1" height="1" fill="#fff"/>
<rect x="168" y="472" width="1" height="1" fill="#fff"/>
<rect x="174" y="472" width="1" height="1" fill="#fff"/>
<rect x="180" y="472" width="1" height="1" fill="#fff"/>
<rect x="186" y="472" width="1" height="1" fill="#fff"/>
<rect x="192" y="472" width="1" height="1" fill="#fff"/>
<rect x="198" y="472" width="1" height="1" fill="#fff"/>
<rect x="204" y="472" width="1" height="1" fill="#fff"/>
<rect x="210" y="472" width="1" height="1" fill="#fff"/>
<rect x="216" y="472" width="1" height="1" fill="#fff"/>
<rect x="222" y="472" width="1" height="1" fill="#fff"/>
<rect x="228" y="472" width="1" height="1" fill="#fff"/>
<rect x="234" y="472" width="1" height="1" fill="#fff"/>
<rect x="240" y="472" width="1" height="1" fill="#fff"/>
<rect x="246" y="472" width="1" height="1" fill="#fff"/>
<rect x="252" y="472" width="1" height="1" fill="#fff"/>
<rect x="258" y="472" width="1" height="1" fill="#fff"/>
<rect x="264" y="472" width="1" height="1" fill="#fff"/>
<rect x="270" y="472" width="1" height="1" fill="#fff"/>
<rect x="276" y="472" width="1" height="1" fill="#fff"/>
<rect x="282" y="472" width="1" height="1" fill="#fff"/>
<rect x="288" y="472" width="1" height="1" fill="#fff"/>
<rect x="294" y="472" width="1" height="1" fill="#fff"/>
<rect x="300" y="472" width="1" height="1" fill="#fff"/>
<rect x="306" y="472" width="1" height="1" fill="#fff"/>
<rect x="312" y="472" width="1" height="1" fill="#fff"/>
<rect x="318" y="472" width="1" height="1" fill="#fff"/>
<rect x="324" y="472" width="1" height="1" fill="#fff"/>
<rect x="330" y="472" width="1" height="1" fill="#fff"/>
<rect x="336" y="472" width="1" height="1" fill="#fff"/>
<rect x="342" y="472" width="1" height="1" fill="#fff"/>
<rect x="348" y="472" width="1" height="1" fill="#fff"/>
<rect x="354" y="472" width="1" height="1" fill="#fff"/>
<rect x="360" y="472" width="1" height="1" fill="#fff"/>
<rect x="366" y="472" width="1" height="1" fill="#fff"/>
<rect x="372" y="472" width="1" height="1" fill="#fff"/>
<rect x="378" y="472" width="1" height="1" fill="#fff"/>
<rect x="384" y="472" width="1" height="1" fill="#fff"/>
<rect x="390" y="472" width="1" height="1" fill="#fff"/>
<rect x="396" y="472" width="1" height="1" fill="#fff"/>
<rect x="402" y="472" width="1" height="1" fill="#fff"/>
<rect x="408" y="472" width="1" height="1" fill="#fff"/>
<rect x="414" y="472" width="1" height="1" fill="#fff"/>
<rect x="420" y="472" width="1" height="1" fill="#fff"/>
<rect x="426" y="472" width="1" height="1" fill="#fff"/>
<rect x="432" y="472" width="1" height="1" fill="#fff"/>
<rect x="438" y="472" width="1" height="1" fill="#fff"/>
<rect x="444" y="472" width="1" height="1" fill="#fff"/>
<rect x="450" y="472" width="1" height="1" fill="#fff"/>
<rect x="456" y="472" width="1" height="1" fill="#fff"/>
<rect x="462" y="472" width="1" height="1" fill="#fff"/>
<rect x="468" y="472" width="1" height="1" fill="#fff"/>
<rect x="474" y="472" width="1" height="1" fill="#fff"/>
<rect x="480" y="472" width="1" height="1" fill="#fff"/>
<rect x="486" y="472" width="1" height="1" fill="#fff"/>
<rect x="492" y="472" width="1" height="1" fill="#fff"/>
<rect x="498" y="472" width="1" height="1" fill="#fff"/>
<rect x="504" y="472" width="1" height="1" fill="#fff"/>
<rect x="510" y="472" width="1" height="1" fill="#fff"/>
<rect x="516" y="472" width="1" height="1" fill="#fff"/>
<rect x="522" y="472" width="1" height="1" fill="#fff"/>
<rect x="528" y="472" width="1" height="1" fill="#fff"/>
<rect x="534" y="472" width="1" height="1" fill="#fff"/>
<rect x="540" y="472" width="1" height="1" fill="#fff"/>
<rect x="546" y="472" width="1" height="1" fill="#fff"/>
<rect x="552" y="472" width="1" height="1" fill="#fff"/>
<rect x="558" y="472" width="1" height="1" fill="#fff"/>
<rect x="564" y="472" width="1" height="1" fill="#fff"/>
<rect x="570" y="472" width="1" height="1" fill="#fff"/>
<rect x="576" y="472" width="1" height="1" fill="#fff"/>
<rect x="582" y="472" width="1" height="1" fill="#fff"/>
<rect x="588" y="472" width="1" height="1" fill="#fff"/>
<rect x="594" y="472" width="1" height="1" fill="#fff"/>
<rect x="600" y="472" width="1" height="1" fill="#fff"/>
<rect x="606" y="472" width="1" height="1" fill="#fff"/>
<rect x="612" y="472" width="1" height="1" fill="#fff"/>
<rect x="618" y="472" width="1" height="1" fill="#fff"/>
<rect x="624" y="472" width="1" height="1" fill="#fff"/>
<rect x="630" y="472" width="1" height="1" fill="#fff"/>
<rect x="636" y="472" width="1" height="1" fill="#fff"/>
<rect x="642" y="472" width="1" height="1" fill="#fff"/>
<rect x="648" y="472" width="1" height="1" fill="#fff"/>
<rect x="654" y="472" width="1" height="1" fill="#fff"/>
<rect x="660" y="472" width="1" height="1" fill="#fff"/>
<rect x="666" y="472" width="1" height="1" fill="#fff"/>
<rect x="109" y="475" width="1" height="9" fill="#fff"/>
<rect x="110" y="478" width="1" height="6" fill="#fff"/>
<rect x="111" y="478" width="1" height="6" fill="#fff"/>
<rect x="112" y="480" width="1" height="4" fill="#fff"/>
<rect x="113" y="479" width="1" height="5" fill="#fff"/>
<rect x="114" y="472" width="1" height="12" fill="#fff"/>
<rect x="115" y="473" width="1" height="11" fill="#fff"/>
<rect x="116" y="470" width="1" height="14" fill="#fff"/>
<rect x="117" y="463" width="1" height="21" fill="#fff"/>
<rect x="118" y="454" width="1" height="30" fill="#fff"/>
<rect x="119" y="452" width="1" height="32" fill="#fff"/>
<rect x="120" y="455" width="1" height="29" fill="#fff"/>
<rect x="121" y="453" width="1" height="31" fill="#fff"/>
<rect x="122" y="451" width="1" height="33" fill="#fff"/>
<rect x="123" y="453" width="1" height="31" fill="#fff"/>
<rect x="124" y="457" width="1" height="27" fill="#fff"/>
<rect x="125" y="460" width="1" height="24" fill="#fff"/>
<rect x="126" y="462" width="1" height="22" fill="#fff"/>
<rect x="127" y="462" width="1" height="22" fill="#fff"/>
<rect x="128" y="466" width="1" height="18" fill="#fff"/>
<rect x="129" y="462" width="1" height="22" fill="#fff"/>
<rect x="130" y="461" width="1" height="23" fill="#fff"/>
<rect x="131" y="464" width="1" height="20" fill="#fff"/>
<rect x="132" y="469" width="1" height="15" fill="#fff"/>
<rect x="133" y="470" width="1" height="14" fill="#fff"/>
<rect x="134" y="472" width="1" height="12" fill="#fff"/>
<rect x="135" y="472" width="1" height="12" fill="#fff"/>
<rect x="136" y="477" width="1" height="7" fill="#fff"/>
<rect x="137" y="471" width="1" height="13" fill="#fff"/>
<rect x="138" y="471" width="1" height="13" fill="#fff"/>
<rect x="139" y="476" width="1" height="8" fill="#fff"/>
<rect x="140" y="479" width="1" height="5" fill="#fff"/>
<rect x="141" y="480" width="1" height="4" fill="#fff"/>
<rect x="142" y="481" width="1" height="3" fill="#fff"/>
<rect x="143" y="481" width="1" height="3" fill="#fff"/>
<rect x="144" y="480" width="1" height="4" fill="#fff"/>
<rect x="145" y="473" width="1" height="11" fill="#fff"/>
<rect x="146" y="473" width="1" height="11" fill="#fff"/>
<rect x="147" y="478" width="1" height="6" fill="#fff"/>
<rect x="148" y="481" width="1" height="3" fill="#fff"/>
<rect x="149" y="482" width="1" height="2" fill="#fff"/>
<rect x="150" y="481" width="1" height="3" fill="#fff"/>
<rect x="151" y="480" width="1" height="4" fill="#fff"/>
<rect x="152" y="479" width="1" height="5" fill="#fff"/>
<rect x="153" y="473" width="1" height="11" fill="#fff"/>
<rect x="154" y="473" width="1" height="11" fill="#fff"/>
<rect x="155" y="478" width="1" height="6" fill="#fff"/>
<rect x="156" y="481" width="1" height="3" fill="#fff"/>
<rect x="157" y="482" width="1" height="2" fill="#fff"/>
<rect x="158" y="481" width="1" height="3" fill="#fff"/>
<rect x="159" y="482" width="1" height="2" fill="#fff"/>
<rect x="160" y="479" width="1" height="5" fill="#fff"/>
<rect x="161" y="474" width="1" height="10" fill="#fff"/>
<rect x="162" y="471" width="1" height="13" fill="#fff"/>
<rect x="163" y="470" width="1" height="14" fill="#fff"/>
<rect x="164" y="462" width="1" height="22" fill="#fff"/>
<rect x="165" y="454" width="1" height="30" fill="#fff"/>
<rect x="166" y="452" width="1" height="32" fill="#fff"/>
<rect x="167" y="455" width="1" height="29" fill="#fff"/>
<rect x="168" y="453" width="1" height="31" fill="#fff"/>
<rect x="169" y="451" width="1" height="33" fill="#fff"/>
<rect x="170" y="453" width="1" height="31" fill="#fff"/>
<rect x="171" y="457" width="1" height="27" fill="#fff"/>
<rect x="172" y="460" width="1" height="24" fill="#fff"/>
<rect x="173" y="462" width="1" height="22" fill="#fff"/>
<rect x="174" y="462" width="1" height="22" fill="#fff"/>
<rect x="175" y="466" width="1" height="18" fill="#fff"/>
<rect x="176" y="462" width="1" height="22" fill="#fff"/>
<rect x="177" y="461" width="1" height="23" fill="#fff"/>
<rect x="178" y="464" width="1" height="20" fill="#fff"/>
<rect x="179" y="469" width="1" height="15" fill="#fff"/>
<rect x="180" y="470" width="1" height="14" fill="#fff"/>
<rect x="181" y="472" width="1" height="12" fill="#fff"/>
<rect x="182" y="472" width="1" height="12" fill="#fff"/>
<rect x="183" y="477" width="1" height="7" fill="#fff"/>
<rect x="184" y="471" width="1" height="13" fill="#fff"/>
<rect x="185" y="471" width="1" height="13" fill="#fff"/>
<rect x="186" y="476" width="1" height="8" fill="#fff"/>
<rect x="187" y="479" width="1" height="5" fill="#fff"/>
<rect x="188" y="480" width="1" height="4" fill="#fff"/>
<rect x="189" y="481" width="1" height="3" fill="#fff"/>
<rect x="190" y="481" width="1" height="3" fill="#fff"/>
<rect x="191" y="480" width="1" height="4" fill="#fff"/>
<rect x="192" y="473" width="1" height="11" fill="#fff"/>
<rect x="193" y="473" width="1" height="11" fill="#fff"/>
<rect x="194" y="478" width="1" height="6" fill="#fff"/>
<rect x="195" y="481" width="1" height="3" fill="#fff"/>
<rect x="196" y="482" width="1" height="2" fill="#fff"/>
<rect x="197" y="481" width="1" height="3" fill="#fff"/>
<rect x="198" y="480" width="1" height="4" fill="#fff"/>
<rect x="199" y="479" width="1" height="5" fill="#fff"/>
<rect x="200" y="473" width="1" height="11" fill="#fff"/>
<rect x="201" y="473" width="1" height="11" fill="#fff"/>
<rect x="202" y="478" width="1" height="6" fill="#fff"/>
<rect x="203" y="481" width="1" height="3" fill="#fff"/>
<rect x="204" y="482" width="1" height="2" fill="#fff"/>
<rect x="205" y="481" width="1" height="3" fill="#fff"/>
<rect x="206" y="482" width="1" height="2" fill="#fff"/>
<rect x="207" y="479" width="1" height="5" fill="#fff"/>
<rect x="208" y="474" width="1" height="10" fill="#fff"/>
<rect x="209" y="471" width="1" height="13" fill="#fff"/>
<rect x="210" y="470" width="1" height="14" fill="#fff"/>
<rect x="211" y="462" width="1" height="22" fill="#fff"/>
<rect x="212" y="454" width="1" height="30" fill="#fff"/>
<rect x="213" y="452" width="1" height="32" fill="#fff"/>
<rect x="214" y="455" width="1" height="29" fill="#fff"/>
<rect x="215" y="453" width="1" height="31" fill="#fff"/>
<rect x="216" y="451" width="1" height="33" fill="#fff"/>
<rect x="217" y="453" width="1" height="31" fill="#fff"/>
<rect x="218" y="457" width="1" height="27" fill="#fff"/>
<rect x="219" y="460" width="1" height="24" fill="#fff"/>
<rect x="220" y="462" width="1" height="22" fill="#fff"/>
<rect x="221" y="462" width="1" height="22" fill="#fff"/>
<rect x="222" y="466" width="1" height="18" fill="#fff"/>
<rect x="223" y="462" width="1" height="22" fill="#fff"/>
<rect x="224" y="461" width="1" height="23" fill="#fff"/>
<rect x="225" y="464" width="1" height="20" fill="#fff"/>
<rect x="226" y="469" width="1" height="15" fill="#fff"/>
<rect x="227" y="470" width="1" height="14" fill="#fff"/>
<rect x="228" y="472" width="1" height="12" fill="#fff"/>
<rect x="229" y="472" width="1" height="12" fill="#fff"/>
<rect x="230" y="477" width="1" height="7" fill="#fff"/>
<rect x="231" y="471" width="1" height="13" fill="#fff"/>
<rect x="232" y="471" width="1" height="13" fill="#fff"/>
<rect x="233" y="476" width="1" height="8" fill="#fff"/>
<rect x="234" y="479" width="1" height="5" fill="#fff"/>
<rect x="235" y="480" width="1" height="4" fill="#fff"/>
<rect x="236" y="481" width="1" height="3" fill="#fff"/>
<rect x="237" y="481" width="1" height="3" fill="#fff"/>
<rect x="238" y="480" width="1" height="4" fill="#fff"/>
<rect x="239" y="473" width="1" height="11" fill="#fff"/>
<rect x="240" y="473" width="1" height="11" fill="#fff"/>
<rect x="241" y="478" width="1" height="6" fill="#fff"/>
<rect x="242" y="481" width="1" height="3" fill="#fff"/>
<rect x="243" y="482" width="1" height="2" fill="#fff"/>
<rect x="244" y="481" width="1" height="3" fill="#fff"/>
<rect x="245" y="480" width="1" height="4" fill="#fff"/>
<rect x="246" y="479" width="1" height="5" fill="#fff"/>
<rect x="247" y="473" width="1" height="11" fill="#fff"/>
<rect x="248" y="473" width="1" height="11" fill="#fff"/>
<rect x="249" y="478" width="1" height="6" fill="#fff"/>
<rect x="250" y="481" width="1" height="3" fill="#fff"/>
<rect x="251" y="482" width="1" height="2" fill="#fff"/>
<rect x="252" y="481" width="1" height="3" fill="#fff"/>
<rect x="253" y="482" width="1" height="2" fill="#fff"/>
<rect x="254" y="476" width="1" height="8" fill="#fff"/>
<rect x="255" y="473" width="1" height="11" fill="#fff"/>
<rect x="256" y="474" width="1" height="10" fill="#fff"/>
<rect x="257" y="469" width="1" height="15" fill="#fff"/>
<rect x="258" y="461" width="1" height="23" fill="#fff"/>
<rect x="259" y="453" width="1" height="31" fill="#fff"/>
<rect x="260" y="452" width="1" height="32" fill="#fff"/>
<rect x="261" y="456" width="1" height="28" fill="#fff"/>
<rect x="262" y="452" width="1" height="32" fill="#fff"/>
<rect x="263" y="452" width="1" height="32" fill="#fff"/>
<rect x="264" y="454" width="1" height="30" fill="#fff"/>
<rect x="265" y="459" width="1" height="25" fill="#fff"/>
<rect x="266" y="460" width="1" height="24" fill="#fff"/>
<rect x="267" y="462" width="1" height="22" fill="#fff"/>
<rect x="268" y="463" width="1" height="21" fill="#fff"/>
<rect x="269" y="467" width="1" height="17" fill="#fff"/>
<rect x="270" y="461" width="1" height="23" fill="#fff"/>
<rect x="271" y="459" width="1" height="25" fill="#fff"/>
<rect x="272" y="458" width="1" height="26" fill="#fff"/>
<rect x="273" y="456" width="1" height="28" fill="#fff"/>
<rect x="274" y="459" width="1" height="25" fill="#fff"/>
<rect x="275" y="462" width="1" height="22" fill="#fff"/>
<rect x="276" y="463" width="1" height="21" fill="#fff"/>
<rect x="277" y="467" width="1" height="17" fill="#fff"/>
<rect x="278" y="460" width="1" height="24" fill="#fff"/>
<rect x="279" y="461" width="1" height="23" fill="#fff"/>
<rect x="280" y="465" width="1" height="19" fill="#fff"/>
<rect x="281" y="469" width="1" height="15" fill="#fff"/>
<rect x="282" y="470" width="1" height="14" fill="#fff"/>
<rect x="283" y="472" width="1" height="12" fill="#fff"/>
<rect x="284" y="472" width="1" height="12" fill="#fff"/>
<rect x="285" y="477" width="1" height="7" fill="#fff"/>
<rect x="286" y="482" width="1" height="2" fill="#fff"/>
<rect x="287" y="482" width="1" height="2" fill="#fff"/>
<rect x="288" y="482" width="1" height="2" fill="#fff"/>
<rect x="289" y="482" width="1" height="2" fill="#fff"/>
<rect x="290" y="482" width="1" height="2" fill="#fff"/>
<rect x="291" y="482" width="1" height="2" fill="#fff"/>
<rect x="292" y="481" width="1" height="3" fill="#fff"/>
<rect x="293" y="478" width="1" height="6" fill="#fff"/>
<rect x="294" y="472" width="1" height="12" fill="#fff"/>
<rect x="295" y="478" width="1" height="6" fill="#fff"/>
<rect x="296" y="481" width="1" height="3" fill="#fff"/>
<rect x="297" y="482" width="1" height="2" fill="#fff"/>
<rect x="298" y="482" width="1" height="2" fill="#fff"/>
<rect x="299" y="482" width="1" height="2" fill="#fff"/>
<rect x="300" y="481" width="1" height="3" fill="#fff"/>
<rect x="301" y="478" width="1" height="6" fill="#fff"/>
<rect x="302" y="474" width="1" height="10" fill="#fff"/>
<rect x="303" y="474" width="1" height="10" fill="#fff"/>
<rect x="304" y="468" width="1" height="16" fill="#fff"/>
<rect x="305" y="461" width="1" height="23" fill="#fff"/>
<rect x="306" y="454" width="1" height="30" fill="#fff"/>
<rect x="307" y="452" width="1" height="32" fill="#fff"/>
<rect x="308" y="455" width="1" height="29" fill="#fff"/>
<rect x="309" y="453" width="1" height="31" fill="#fff"/>
<rect x="310" y="451" width="1" height="33" fill="#fff"/>
<rect x="311" y="453" width="1" height="31" fill="#fff"/>
<rect x="312" y="457" width="1" height="27" fill="#fff"/>
<rect x="313" y="460" width="1" height="24" fill="#fff"/>
<rect x="314" y="462" width="1" height="22" fill="#fff"/>
<rect x="315" y="462" width="1" height="22" fill="#fff"/>
<rect x="316" y="466" width="1" height="18" fill="#fff"/>
<rect x="317" y="462" width="1" height="22" fill="#fff"/>
<rect x="318" y="461" width="1" height="23" fill="#fff"/>
<rect x="319" y="464" width="1" height="20" fill="#fff"/>
<rect x="320" y="469" width="1" height="15" fill="#fff"/>
<rect x="321" y="470" width="1" height="14" fill="#fff"/>
<rect x="322" y="472" width="1" height="12" fill="#fff"/>
<rect x="323" y="472" width="1" height="12" fill="#fff"/>
<rect x="324" y="477" width="1" height="7" fill="#fff"/>
<rect x="325" y="471" width="1" height="13" fill="#fff"/>
<rect x="326" y="471" width="1" height="13" fill="#fff"/>
<rect x="327" y="476" width="1" height="8" fill="#fff"/>
<rect x="328" y="479" width="1" height="5" fill="#fff"/>
<rect x="329" y="480" width="1" height="4" fill="#fff"/>
<rect x="330" y="481" width="1" height="3" fill="#fff"/>
<rect x="331" y="481" width="1" height="3" fill="#fff"/>
<rect x="332" y="480" width="1" height="4" fill="#fff"/>
<rect x="333" y="473" width="1" height="11" fill="#fff"/>
<rect x="334" y="473" width="1" height="11" fill="#fff"/>
<rect x="335" y="478" width="1" height="6" fill="#fff"/>
<rect x="336" y="481" width="1" height="3" fill="#fff"/>
<rect x="337" y="482" width="1" height="2" fill="#fff"/>
<rect x="338" y="481" width="1" height="3" fill="#fff"/>
<rect x="339" y="480" width="1" height="4" fill="#fff"/>
<rect x="340" y="479" width="1" height="5" fill="#fff"/>
<rect x="341" y="473" width="1" height="11" fill="#fff"/>
<rect x="342" y="473" width="1" height="11" fill="#fff"/>
<rect x="343" y="478" width="1" height="6" fill="#fff"/>
<rect x="344" y="481" width="1" height="3" fill="#fff"/>
<rect x="345" y="482" width="1" height="2" fill="#fff"/>
<rect x="346" y="481" width="1" height="3" fill="#fff"/>
<rect x="347" y="482" width="1" height="2" fill="#fff"/>
<rect x="348" y="479" width="1" height="5" fill="#fff"/>
<rect x="349" y="474" width="1" height="10" fill="#fff"/>
<rect x="350" y="471" width="1" height="13" fill="#fff"/>
<rect x="351" y="470" width="1" height="14" fill="#fff"/>
<rect x="352" y="462" width="1" height="22" fill="#fff"/>
<rect x="353" y="454" width="1" height="30" fill="#fff"/>
<rect x="354" y="452" width="1" height="32" fill="#fff"/>
<rect x="355" y="455" width="1" height="29" fill="#fff"/>
<rect x="356" y="453" width="1" height="31" fill="#fff"/>
<rect x="357" y="451" width="1" height="33" fill="#fff"/>
<rect x="358" y="453" width="1" height="31" fill="#fff"/>
<rect x="359" y="457" width="1" height="27" fill="#fff"/>
<rect x="360" y="460" width="1" height="24" fill="#fff"/>
<rect x="361" y="462" width="1" height="22" fill="#fff"/>
<rect x="362" y="462" width="1" height="22" fill="#fff"/>
<rect x="363" y="466" width="1" height="18" fill="#fff"/>
<rect x="364" y="462" width="1" height="22" fill="#fff"/>
<rect x="365" y="461" width="1" height="23" fill="#fff"/>
<rect x="366" y="464" width="1" height="20" fill="#fff"/>
<rect x="367" y="469" width="1" height="15" fill="#fff"/>
<rect x="368" y="470" width="1" height="14" fill="#fff"/>
<rect x="369" y="472" width="1" height="12" fill="#fff"/>
<rect x="370" y="472" width="1" height="12" fill="#fff"/>
<rect x="371" y="477" width="1" height="7" fill="#fff"/>
<rect x="372" y="471" width="1" height="13" fill="#fff"/>
<rect x="373" y="471" width="1" height="13" fill="#fff"/>
<rect x="374" y="476" width="1" height="8" fill="#fff"/>
<rect x="375" y="479" width="1" height="5" fill="#fff"/>
<rect x="376" y="480" width="1" height="4" fill="#fff"/>
<rect x="377" y="481" width="1" height="3" fill="#fff"/>
<rect x="378" y="481" width="1" height="3" fill="#fff"/>
<rect x="379" y="480" width="1" height="4" fill="#fff"/>
<rect x="380" y="473" width="1" height="11" fill="#fff"/>
<rect x="381" y="473" width="1" height="11" fill="#fff"/>
<rect x="382" y="478" width="1" height="6" fill="#fff"/>
<rect x="383" y="481" width="1" height="3" fill="#fff"/>
<rect x="384" y="482" width="1" height="2" fill="#fff"/>
<rect x="385" y="481" width="1" height="3" fill="#fff"/>
<rect x="386" y="480" width="1" height="4" fill="#fff"/>
<rect x="387" y="479" width="1" height="5" fill="#fff"/>
<rect x="388" y="473" width="1" height="11" fill="#fff"/>
<rect x="389" y="473" width="1" height="11" fill="#fff"/>
<rect x="390" y="478" width="1" height="6" fill="#fff"/>
<rect x="391" y="481" width="1" height="3" fill="#fff"/>
<rect x="392" y="482" width="1" height="2" fill="#fff"/>
<rect x="393" y="481" width="1" height="3" fill="#fff"/>
<rect x="394" y="482" width="1" height="2" fill="#fff"/>
<rect x="395" y="479" width="1" height="5" fill="#fff"/>
<rect x="396" y="474" width="1" height="10" fill="#fff"/>
<rect x="397" y="471" width="1" height="13" fill="#fff"/>
<rect x="398" y="470" width="1" height="14" fill="#fff"/>
<rect x="399" y="462" width="1" height="22" fill="#fff"/>
<rect x="400" y="454" width="1" height="30" fill="#fff"/>
<rect x="401" y="452" width="1" height="32" fill="#fff"/>
<rect x="402" y="455" width="1" height="29" fill="#fff"/>
<rect x="403" y="453" width="1" height="31" fill="#fff"/>
<rect x="404" y="451" width="1" height="33" fill="#fff"/>
<rect x="405" y="453" width="1" height="31" fill="#fff"/>
<rect x="406" y="457" width="1" height="27" fill="#fff"/>
<rect x="407" y="460" width="1" height="24" fill="#fff"/>
<rect x="408" y="462" width="1" height="22" fill="#fff"/>
<rect x="409" y="462" width="1" height="22" fill="#fff"/>
<rect x="410" y="466" width="1" height="18" fill="#fff"/>
<rect x="411" y="462" width="1" height="22" fill="#fff"/>
<rect x="412" y="461" width="1" height="23" fill="#fff"/>
<rect x="413" y="464" width="1" height="20" fill="#fff"/>
<rect x="414" y="469" width="1" height="15" fill="#fff"/>
<rect x="415" y="470" width="1" height="14" fill="#fff"/>
<rect x="416" y="472" width="1" height="12" fill="#fff"/>
<rect x="417" y="472" width="1" height="12" fill="#fff"/>
<rect x="418" y="477" width="1" height="7" fill="#fff"/>
<rect x="419" y="471" width="1" height="13" fill="#fff"/>
<rect x="420" y="471" width="1" height="13" fill="#fff"/>
<rect x="421" y="476" width="1" height="8" fill="#fff"/>
<rect x="422" y="479" width="1" height="5" fill="#fff"/>
<rect x="423" y="480" width="1" height="4" fill="#fff"/>
<rect x="424" y="481" width="1" height="3" fill="#fff"/>
<rect x="425" y="481" width="1" height="3" fill="#fff"/>
<rect x="426" y="480" width="1" height="4" fill="#fff"/>
<rect x="427" y="473" width="1" height="11" fill="#fff"/>
<rect x="428" y="473" width="1" height="11" fill="#fff"/>
<rect x="429" y="478" width="1" height="6" fill="#fff"/>
<rect x="430" y="481" width="1" height="3" fill="#fff"/>
<rect x="431" y="482" width="1" height="2" fill="#fff"/>
<rect x="432" y="481" width="1" height="3" fill="#fff"/>
<rect x="433" y="480" width="1" height="4" fill="#fff"/>
<rect x="434" y="479" width="1" height="5" fill="#fff"/>
<rect x="435" y="473" width="1" height="11" fill="#fff"/>
<rect x="436" y="475" width="1" height="9" fill="#fff"/>
<rect x="437" y="480" width="1" height="4" fill="#fff"/>
<rect x="438" y="482" width="1" height="2" fill="#fff"/>
<rect x="439" y="482" width="1" height="2" fill="#fff"/>
<rect x="440" y="482" width="1" height="2" fill="#fff"/>
<rect x="441" y="481" width="1" height="3" fill="#fff"/>
<rect x="442" y="474" width="1" height="10" fill="#fff"/>
<rect x="443" y="473" width="1" height="11" fill="#fff"/>
<rect x="444" y="472" width="1" height="12" fill="#fff"/>
<rect x="445" y="467" width="1" height="17" fill="#fff"/>
<rect x="446" y="460" width="1" height="24" fill="#fff"/>
<rect x="447" y="452" width="1" height="32" fill="#fff"/>
<rect x="448" y="452" width="1" height="32" fill="#fff"/>
<rect x="449" y="457" width="1" height="27" fill="#fff"/>
<rect x="450" y="452" width="1" height="32" fill="#fff"/>
<rect x="451" y="452" width="1" height="32" fill="#fff"/>
<rect x="452" y="457" width="1" height="27" fill="#fff"/>
<rect x="453" y="459" width="1" height="25" fill="#fff"/>
<rect x="454" y="460" width="1" height="24" fill="#fff"/>
<rect x="455" y="462" width="1" height="22" fill="#fff"/>
<rect x="456" y="463" width="1" height="21" fill="#fff"/>
<rect x="457" y="467" width="1" height="17" fill="#fff"/>
<rect x="458" y="461" width="1" height="23" fill="#fff"/>
<rect x="459" y="458" width="1" height="26" fill="#fff"/>
<rect x="460" y="456" width="1" height="28" fill="#fff"/>
<rect x="461" y="456" width="1" height="28" fill="#fff"/>
<rect x="462" y="461" width="1" height="23" fill="#fff"/>
<rect x="463" y="462" width="1" height="22" fill="#fff"/>
<rect x="464" y="463" width="1" height="21" fill="#fff"/>
<rect x="465" y="465" width="1" height="19" fill="#fff"/>
<rect x="466" y="460" width="1" height="24" fill="#fff"/>
<rect x="467" y="460" width="1" height="24" fill="#fff"/>
<rect x="468" y="465" width="1" height="19" fill="#fff"/>
<rect x="469" y="469" width="1" height="15" fill="#fff"/>
<rect x="470" y="472" width="1" height="12" fill="#fff"/>
<rect x="471" y="471" width="1" height="13" fill="#fff"/>
<rect x="472" y="475" width="1" height="9" fill="#fff"/>
<rect x="473" y="477" width="1" height="7" fill="#fff"/>
<rect x="474" y="478" width="1" height="6" fill="#fff"/>
<rect x="475" y="482" width="1" height="2" fill="#fff"/>
<rect x="476" y="482" width="1" height="2" fill="#fff"/>
<rect x="477" y="482" width="1" height="2" fill="#fff"/>
<rect x="478" y="482" width="1" height="2" fill="#fff"/>
<rect x="479" y="482" width="1" height="2" fill="#fff"/>
<rect x="480" y="481" width="1" height="3" fill="#fff"/>
<rect x="481" y="474" width="1" height="10" fill="#fff"/>
<rect x="482" y="473" width="1" height="11" fill="#fff"/>
<rect x="483" y="476" width="1" height="8" fill="#fff"/>
<rect x="484" y="479" width="1" height="5" fill="#fff"/>
<rect x="485" y="482" width="1" height="2" fill="#fff"/>
<rect x="486" y="482" width="1" height="2" fill="#fff"/>
<rect x="487" y="482" width="1" height="2" fill="#fff"/>
<rect x="488" y="481" width="1" height="3" fill="#fff"/>
<rect x="489" y="473" width="1" height="11" fill="#fff"/>
<rect x="490" y="473" width="1" height="11" fill="#fff"/>
<rect x="491" y="473" width="1" height="11" fill="#fff"/>
<rect x="492" y="466" width="1" height="18" fill="#fff"/>
<rect x="493" y="459" width="1" height="25" fill="#fff"/>
<rect x="494" y="454" width="1" height="30" fill="#fff"/>
<rect x="495" y="452" width="1" height="32" fill="#fff"/>
<rect x="496" y="455" width="1" height="29" fill="#fff"/>
<rect x="497" y="453" width="1" height="31" fill="#fff"/>
<rect x="498" y="451" width="1" height="33" fill="#fff"/>
<rect x="499" y="453" width="1" height="31" fill="#fff"/>
<rect x="500" y="457" width="1" height="27" fill="#fff"/>
<rect x="501" y="460" width="1" height="24" fill="#fff"/>
<rect x="502" y="462" width="1" height="22" fill="#fff"/>
<rect x="503" y="462" width="1" height="22" fill="#fff"/>
<rect x="504" y="466" width="1" height="18" fill="#fff"/>
<rect x="505" y="462" width="1" height="22" fill="#fff"/>
<rect x="506" y="461" width="1" height="23" fill="#fff"/>
<rect x="507" y="464" width="1" height="20" fill="#fff"/>
<rect x="508" y="469" width="1" height="15" fill="#fff"/>
<rect x="509" y="470" width="1" height="14" fill="#fff"/>
<rect x="510" y="472" width="1" height="12" fill="#fff"/>
<rect x="511" y="472" width="1" height="12" fill="#fff"/>
<rect x="512" y="477" width="1" height="7" fill="#fff"/>
<rect x="513" y="471" width="1" height="13" fill="#fff"/>
<rect x="514" y="471" width="1" height="13" fill="#fff"/>
<rect x="515" y="476" width="1" height="8" fill="#fff"/>
<rect x="516" y="479" width="1" height="5" fill="#fff"/>
<rect x="517" y="480" width="1" height="4" fill="#fff"/>
<rect x="518" y="481" width="1" height="3" fill="#fff"/>
<rect x="519" y="481" width="1" height="3" fill="#fff"/>
<rect x="520" y="480" width="1" height="4" fill="#fff"/>
<rect x="521" y="473" width="1" height="11" fill="#fff"/>
<rect x="522" y="473" width="1" height="11" fill="#fff"/>
<rect x="523" y="478" width="1" height="6" fill="#fff"/>
<rect x="524" y="481" width="1" height="3" fill="#fff"/>
<rect x="525" y="482" width="1" height="2" fill="#fff"/>
<rect x="526" y="481" width="1" height="3" fill="#fff"/>
<rect x="527" y="480" width="1" height="4" fill="#fff"/>
<rect x="528" y="479" width="1" height="5" fill="#fff"/>
<rect x="529" y="473" width="1" height="11" fill="#fff"/>
<rect x="530" y="473" width="1" height="11" fill="#fff"/>
<rect x="531" y="478" width="1" height="6" fill="#fff"/>
<rect x="532" y="481" width="1" height="3" fill="#fff"/>
<rect x="533" y="482" width="1" height="2" fill="#fff"/>
<rect x="534" y="481" width="1" height="3" fill="#fff"/>
<rect x="535" y="482" width="1" height="2" fill="#fff"/>
<rect x="536" y="479" width="1" height="5" fill="#fff"/>
<rect x="537" y="474" width="1" height="10" fill="#fff"/>
<rect x="538" y="471" width="1" height="13" fill="#fff"/>
<rect x="539" y="470" width="1" height="14" fill="#fff"/>
<rect x="540" y="462" width="1" height="22" fill="#fff"/>
<rect x="541" y="454" width="1" height="30" fill="#fff"/>
<rect x="542" y="452" width="1" height="32" fill="#fff"/>
<rect x="543" y="455" width="1" height="29" fill="#fff"/>
<rect x="544" y="453" width="1" height="31" fill="#fff"/>
<rect x="545" y="451" width="1" height="33" fill="#fff"/>
<rect x="546" y="453" width="1" height="31" fill="#fff"/>
<rect x="547" y="457" width="1" height="27" fill="#fff"/>
<rect x="548" y="460" width="1" height="24" fill="#fff"/>
<rect x="549" y="462" width="1" height="22" fill="#fff"/>
<rect x="550" y="462" width="1" height="22" fill="#fff"/>
<rect x="551" y="466" width="1" height="18" fill="#fff"/>
<rect x="552" y="462" width="1" height="22" fill="#fff"/>
<rect x="553" y="461" width="1" height="23" fill="#fff"/>
<rect x="554" y="464" width="1" height="20" fill="#fff"/>
<rect x="555" y="469" width="1" height="15" fill="#fff"/>
<rect x="556" y="470" width="1" height="14" fill="#fff"/>
<rect x="557" y="472" width="1" height="12" fill="#fff"/>
<rect x="558" y="472" width="1" height="12" fill="#fff"/>
<rect x="559" y="477" width="1" height="7" fill="#fff"/>
<rect x="560" y="471" width="1" height="13" fill="#fff"/>
<rect x="561" y="471" width="1" height="13" fill="#fff"/>
<rect x="562" y="476" width="1" height="8" fill="#fff"/>
<rect x="563" y="479" width="1" height="5" fill="#fff"/>
<rect x="564" y="480" width="1" height="4" fill="#fff"/>
<rect x="565" y="481" width="1" height="3" fill="#fff"/>
<rect x="566" y="481" width="1" height="3" fill="#fff"/>
<rect x="567" y="480" width="1" height="4" fill="#fff"/>
<rect x="568" y="473" width="1" height="11" fill="#fff"/>
<rect x="569" y="473" width="1" height="11" fill="#fff"/>
<rect x="570" y="478" width="1" height="6" fill="#fff"/>
<rect x="571" y="481" width="1" height="3" fill="#fff"/>
<rect x="572" y="482" width="1" height="2" fill="#fff"/>
<rect x="573" y="481" width="1" height="3" fill="#fff"/>
<rect x="574" y="480" width="1" height="4" fill="#fff"/>
<rect x="575" y="479" width="1" height="5" fill="#fff"/>
<rect x="576" y="473" width="1" height="11" fill="#fff"/>
<rect x="577" y="473" width="1" height="11" fill="#fff"/>
<rect x="578" y="478" width="1" height="6" fill="#fff"/>
<rect x="579" y="481" width="1" height="3" fill="#fff"/>
<rect x="580" y="482" width="1" height="2" fill="#fff"/>
<rect x="581" y="481" width="1" height="3" fill="#fff"/>
<rect x="582" y="482" width="1" height="2" fill="#fff"/>
<rect x="583" y="479" width="1" height="5" fill="#fff"/>
<rect x="584" y="474" width="1" height="10" fill="#fff"/>
<rect x="585" y="471" width="1" height="13" fill="#fff"/>
<rect x="586" y="470" width="1" height="14" fill="#fff"/>
<rect x="587" y="462" width="1" height="22" fill="#fff"/>
<rect x="588" y="454" width="1" height="30" fill="#fff"/>
<rect x="589" y="452" width="1" height="32" fill="#fff"/>
<rect x="590" y="455" width="1" height="29" fill="#fff"/>
<rect x="591" y="453" width="1" height="31" fill="#fff"/>
<rect x="592" y="451" width="1" height="33" fill="#fff"/>
<rect x="593" y="453" width="1" height="31" fill="#fff"/>
<rect x="594" y="457" width="1" height="27" fill="#fff"/>
<rect x="595" y="460" width="1" height="24" fill="#fff"/>
<rect x="596" y="462" width="1" height="22" fill="#fff"/>
<rect x="597" y="462" width="1" height="22" fill="#fff"/>
<rect x="598" y="466" width="1" height="18" fill="#fff"/>
<rect x="599" y="462" width="1" height="22" fill="#fff"/>
<rect x="600" y="461" width="1" height="23" fill="#fff"/>
<rect x="601" y="464" width="1" height="20" fill="#fff"/>
<rect x="602" y="469" width="1" height="15" fill="#fff"/>
<rect x="603" y="470" width="1" height="14" fill="#fff"/>
<rect x="604" y="472" width="1" height="12" fill="#fff"/>
<rect x="605" y="472" width="1" height="12" fill="#fff"/>
<rect x="606" y="477" width="1" height="7" fill="#fff"/>
<rect x="607" y="471" width="1" height="13" fill="#fff"/>
<rect x="608" y="471" width="1" height="13" fill="#fff"/>
<rect x="609" y="476" width="1" height="8" fill="#fff"/>
<rect x="610" y="479" width="1" height="5" fill="#fff"/>
<rect x="611" y="480" width="1" height="4" fill="#fff"/>
<rect x="612" y="481" width="1" height="3" fill="#fff"/>
<rect x="613" y="481" width="1" height="3" fill="#fff"/>
<rect x="614" y="480" width="1" height="4" fill="#fff"/>
<rect x="615" y="473" width="1" height="11" fill="#fff"/>
<rect x="616" y="473" width="1" height="11" fill="#fff"/>
<rect x="617" y="478" width="1" height="6" fill="#fff"/>
<rect x="618" y="481" width="1" height="3" fill="#fff"/>
<rect x="619" y="482" width="1" height="2" fill="#fff"/>
<rect x="620" y="481" width="1" height="3" fill="#fff"/>
<rect x="621" y="480" width="1" height="4" fill="#fff"/>
<rect x="622" y="479" width="1" height="5" fill="#fff"/>
<rect x="623" y="473" width="1" height="11" fill="#fff"/>
<rect x="624" y="475" width="1" height="9" fill="#fff"/>
<rect x="625" y="480" width="1" height="4" fill="#fff"/>
<rect x="626" y="482" width="1" height="2" fill="#fff"/>
<rect x="627" y="482" width="1" height="2" fill="#fff"/>
<rect x="628" y="482" width="1" height="2" fill="#fff"/>
<rect x="629" y="481" width="1" height="3" fill="#fff"/>
<rect x="630" y="474" width="1" height="10" fill="#fff"/>
<rect x="631" y="473" width="1" height="11" fill="#fff"/>
<rect x="632" y="472" width="1" height="12" fill="#fff"/>
<rect x="633" y="467" width="1" height="17" fill="#fff"/>
<rect x="634" y="460" width="1" height="24" fill="#fff"/>
<rect x="635" y="452" width="1" height="32" fill="#fff"/>
<rect x="636" y="452" width="1" height="32" fill="#fff"/>
<rect x="637" y="457" width="1" height="27" fill="#fff"/>
<rect x="638" y="452" width="1" height="32" fill="#fff"/>
<rect x="639" y="452" width="1" height="32" fill="#fff"/>
<rect x="640" y="457" width="1" height="27" fill="#fff"/>
<rect x="641" y="459" width="1" height="25" fill="#fff"/>
<rect x="642" y="460" width="1" height="24" fill="#fff"/>
<rect x="643" y="462" width="1" height="22" fill="#fff"/>
<rect x="644" y="463" width="1" height="21" fill="#fff"/>
<rect x="645" y="467" width="1" height="17" fill="#fff"/>
<rect x="646" y="461" width="1" height="23" fill="#fff"/>
<rect x="647" y="458" width="1" height="26" fill="#fff"/>
<rect x="648" y="456" width="1" height="28" fill="#fff"/>
<rect x="649" y="456" width="1" height="28" fill="#fff"/>
<rect x="650" y="461" width="1" height="23" fill="#fff"/>
<rect x="651" y="462" width="1" height="22" fill="#fff"/>
<rect x="652" y="463" width="1" height="21" fill="#fff"/>
<rect x="653" y="465" width="1" height="19" fill="#fff"/>
<rect x="654" y="460" width="1" height="24" fill="#fff"/>
<rect x="655" y="460" width="1" height="24" fill="#fff"/>
<rect x="656" y="465" width="1" height="19" fill="#fff"/>
<rect x="657" y="469" width="1" height="15" fill="#fff"/>
<rect x="658" y="472" width="1" height="12" fill="#fff"/>
<rect x="659" y="471" width="1" height="13" fill="#fff"/>
<rect x="660" y="475" width="1" height="9" fill="#fff"/>
<rect x="661" y="477" width="1" height="7" fill="#fff"/>
<rect x="662" y="478" width="1" height="6" fill="#fff"/>
<rect x="663" y="482" width="1" height="2" fill="#fff"/>
<rect x="664" y="482" width="1" height="2" fill="#fff"/>
<rect x="665" y="482" width="1" height="2" fill="#fff"/>
<rect x="666" y="482" width="1" height="2" fill="#fff"/>
<rect x="667" y="482" width="1" height="2" fill="#fff"/>
<rect x="668" y="481" width="1" height="3" fill="#fff"/>
<rect x="669" y="474" width="1" height="10" fill="#fff"/>
<rect x="670" y="473" width="1" height="11" fill="#fff"/>
<rect x="112" y="483" width="1" height="1" fill="#ff0000"/>
<rect x="113" y="483" width="1" height="1" fill="#ff0000"/>
<rect x="143" y="483" width="1" height="1" fill="#ff0000"/>
<rect x="144" y="483" width="1" height="1" fill="#ff0000"/>
<rect x="149" y="483" width="1" height="1" fill="#ff0000"/>
<rect x="151" y="483" width="1" height="1" fill="#ff0000"/>
<rect x="152" y="483" width="1" height="1" fill="#ff0000"/>
<rect x="157" y="483" width="1" height="1" fill="#ff0000"/>
<rect x="159" y="483" width="1" height="1" fill="#ff0000"/>
<rect x="160" y="483" width="1" height="1" fill="#ff0000"/>
<rect x="190" y="483" width="1" height="1" fill="#ff0000"/>
<rect x="191" y="483" width="1" height="1" fill="#ff0000"/>
<rect x="196" y="483" width="1" height="1" fill="#ff0000"/>
<rect x="198" y="483" width="1" height="1" fill="#ff0000"/>
<rect x="199" y="483" width="1" height="1" fill="#ff0000"/>
<rect x="204" y="483" width="1" height="1" fill="#ff0000"/>
<rect x="206" y="483" width="1" height="1" fill="#ff0000"/>
<rect x="207" y="483" width="1" height="1" fill="#ff0000"/>
<rect x="237" y="483" width="1" height="1" fill="#ff0000"/>
<rect x="238" y="483" width="1" height="1" fill="#ff0000"/>
<rect x="243" y="483" width="1" height="1" fill="#ff0000"/>
<rect x="245" y="483" width="1" height="1" fill="#ff0000"/>
<rect x="246" y="483" width="1" height="1" fill="#ff0000"/>
<rect x="251" y="483" width="1" height="1" fill="#ff0000"/>
<rect x="253" y="483" width="1" height="1" fill="#ff0000"/>
<rect x="289" y="483" width="1" height="1" fill="#ff0000"/>
<rect x="290" y="483" width="1" height="1" fill="#ff0000"/>
<rect x="292" y="483" width="1" height="1" fill="#ff0000"/>
<rect x="293" y="483" width="1" height="1" fill="#ff0000"/>
<rect x="297" y="483" width="1" height="1" fill="#ff0000"/>
<rect x="299" y="483" width="1" height="1" fill="#ff0000"/>
<rect x="300" y="483" width="1" height="1" fill="#ff0000"/>
<rect x="331" y="483" width="1" height="1" fill="#ff0000"/>
<rect x="332" y="483" width="1" height="1" fill="#ff0000"/>
<rect x="337" y="483" width="1" height="1" fill="#ff0000"/>
<rect x="339" y="483" width="1" height="1" fill="#ff0000"/>
<rect x="340" y="483" width="1" height="1" fill="#ff0000"/>
<rect x="345" y="483" width="1" height="1" fill="#ff0000"/>
<rect x="347" y="483" width="1" height="1" fill="#ff0000"/>
<rect x="348" y="483" width="1" height="1" fill="#ff0000"/>
<rect x="378" y="483" width="1" height="1" fill="#ff0000"/>
<rect x="379" y="483" width="1" height="1" fill="#ff0000"/>
<rect x="384" y="483" width="1" height="1" fill="#ff0000"/>
<rect x="386" y="483" width="1" height="1" fill="#ff0000"/>
<rect x="387" y="483" width="1" height="1" fill="#ff0000"/>
<rect x="392" y="483" width="1" height="1" fill="#ff0000"/>
<rect x="394" y="483" width="1" height="1" fill="#ff0000"/>
<rect x="395" y="483" width="1" height="1" fill="#ff0000"/>
<rect x="425" y="483" width="1" height="1" fill="#ff0000"/>
<rect x="426" y="483" width="1" height="1" fill="#ff0000"/>
<rect x="431" y="483" width="1" height="1" fill="#ff0000"/>
<rect x="433" y="483" width="1" height="1" fill="#ff0000"/>
<rect x="434" y="483" width="1" height="1" fill="#ff0000"/>
<rect x="438" y="483" width="1" height="1" fill="#ff0000"/>
<rect x="440" y="483" width="1" height="1" fill="#ff0000"/>
<rect x="441" y="483" width="1" height="1" fill="#ff0000"/>
<rect x="476" y="483" width="1" height="1" fill="#ff0000"/>
<rect x="477" y="483" width="1" height="1" fill="#ff0000"/>
<rect x="479" y="483" width="1" height="1" fill="#ff0000"/>
<rect x="480" y="483" width="1" height="1" fill="#ff0000"/>
<rect x="485" y="483" width="1" height="1" fill="#ff0000"/>
<rect x="487" y="483" width="1" height="1" fill="#ff0000"/>
<rect x="488" y="483" width="1" height="1" fill="#ff0000"/>
<rect x="519" y="483" width="1" height="1" fill="#ff0000"/>
<rect x="520" y="483" width="1" height="1" fill="#ff0000"/>
<rect x="525" y="483" width="1" height="1" fill="#ff0000"/>
<rect x="527" y="483" width="1" height="1" fill="#ff0000"/>
<rect x="528" y="483" width="1" height="1" fill="#ff0000"/>
<rect x="533" y="483" width="1" height="1" fill="#ff0000"/>
<rect x="535" y="483" width="1" height="1" fill="#ff0000"/>
<rect x="536" y="483" width="1" height="1" fill="#ff0000"/>
<rect x="566" y="483" width="1" height="1" fill="#ff0000"/>
<rect x="567" y="483" width="1" height="1" fill="#ff0000"/>
<rect x="572" y="483" width="1" height="1" fill="#ff0000"/>
<rect x="574" y="483" width="1" height="1" fill="#ff0000"/>
<rect x="575" y="483" width="1" height="1" fill="#ff0000"/>
<rect x="580" y="483" width="1" height="1" fill="#ff0000"/>
<rect x="582" y="483" width="1" height="1" fill="#ff0000"/>
<rect x="583" y="483" width="1" height="1" fill="#ff0000"/>
<rect x="613" y="483" width="1" height="1" fill="#ff0000"/>
<rect x="614" y="483" width="1" height="1" fill="#ff0000"/>
<rect x="619" y="483" width="1" height="1" fill="#ff0000"/>
<rect x="621" y="483" width="1" height="1" fill="#ff0000"/>
<rect x="622" y="483" width="1" height="1" fill="#ff0000"/>
<rect x="626" y="483" width="1" height="1" fill="#ff0000"/>
<rect x="628" y="483" width="1" height="1" fill="#ff0000"/>
<rect x="629" y="483" width="1" height="1" fill="#ff0000"/>
<rect x="664" y="483" width="1" height="1" fill="#ff0000"/>
<rect x="665" y="483" width="1" height="1" fill="#ff0000"/>
<rect x="667" y="483" width="1" height="1" fill="#ff0000"/>
<rect x="668" y="483" width="1" height="1" fill="#ff0000"/>
<rect x="112" y="483" width="1" height="1" fill="#ff0000"/>
<rect x="113" y="483" width="1" height="1" fill="#ff0000"/>
<rect x="143" y="483" width="1" height="1" fill="#ff0000"/>
<rect x="144" y="483" width="1" height="1" fill="#ff0000"/>
<rect x="149" y="483" width="1" height="1" fill="#ff0000"/>
<rect x="151" y="483" width="1" height="1" fill="#ff0000"/>
<rect x="152" y="483" width="1" height="1" fill="#ff0000"/>
<rect x="157" y="483" width="1" height="1" fill="#ff0000"/>
<rect x="159" y="483" width="1" height="1" fill="#ff0000"/>
<rect x="160" y="483" width="1" height="1" fill="#ff0000"/>
<rect x="190" y="483" width="1" height="1" fill="#ff0000"/>
<rect x="191" y="483" width="1" height="1" fill="#ff0000"/>
<rect x="196" y="483" width="1" height="1" fill="#ff0000"/>
<rect x="198" y="483" width="1" height="1" fill="#ff0000"/>
<rect x="199" y="483" width="1" height="1" fill="#ff0000"/>
<rect x="204" y="483" width="1" height="1" fill="#ff0000"/>
<rect x="206" y="483" width="1" height="1" fill="#ff0000"/>
<rect x="207" y="483" width="1" height="1" fill="#ff0000"/>
<rect x="237" y="483" width="1" height="1" fill="#ff0000"/>
<rect x="238" y="483" width="1" height="1" fill="#ff0000"/>
<rect x="243" y="483" width="1" height="1" fill="#ff0000"/>
<rect x="245" y="483" width="1" height="1" fill="#ff0000"/>
<rect x="246" y="483" width="1" height="1" fill="#ff0000"/>
<rect x="251" y="483" width="1" height="1" fill="#ff0000"/>
<rect x="253" y="483" width="1" height="1" fill="#ff0000"/>
<rect x="289" y="483" width="1" height="1" fill="#ff0000"/>
<rect x="290" y="483" width="1" height="1" fill="#ff0000"/>
<rect x="292" y="483" width="1" height="1" fill="#ff0000"/>
<rect x="293" y="483" width="1" height="1" fill="#ff0000"/>
<rect x="297" y="483" width="1" height="1" fill="#ff0000"/>
<rect x="299" y="483" width="1" height="1" fill="#ff0000"/>
<rect x="300" y="483" width="1" height="1" fill="#ff0000"/>
<rect x="331" y="483" width="1" height="1" fill="#ff0000"/>
<rect x="332" y="483" width="1" height="1" fill="#ff0000"/>
<rect x="337" y="483" width="1" height="1" fill="#ff0000"/>
<rect x="339" y="483" width="1" height="1" fill="#ff0000"/>
<rect x="340" y="483" width="1" height="1" fill="#ff0000"/>
<rect x="345" y="483" width="1" height="1" fill="#ff0000"/>
<rect x="347" y="483" width="1" height="1" fill="#ff0000"/>
<rect x="348" y="483" width="1" height="1" fill="#ff0000"/>
<rect x="378" y="483" width="1" height="1" fill="#ff0000"/>
<rect x="379" y="483" width="1" height="1" fill="#ff0000"/>
<rect x="384" y="483" width="1" height="1" fill="#ff0000"/>
<rect x="386" y="483" width="1" height="1" fill="#ff0000"/>
<rect x="387" y="483" width="1" height="1" fill="#ff0000"/>
<rect x="392" y="483" width="1" height="1" fill="#ff0000"/>
<rect x="394" y="483" width="1" height="1" fill="#ff0000"/>
<rect x="395" y="483" width="1" height="1" fill="#ff0000"/>
<rect x="425" y="483" width="1" height="1" fill="#ff0000"/>
<rect x="426" y="483" width="1" height="1" fill="#ff0000"/>
<rect x="431" y="483" width="1" height="1" fill="#ff0000"/>
<rect x="433" y="483" width="1" height="1" fill="#ff0000"/>
<rect x="434" y="483" width="1" height="1" fill="#ff0000"/>
<rect x="438" y="483" width="1" height="1" fill="#ff0000"/>
<rect x="440" y="483" width="1" height="1" fill="#ff0000"/>
<rect x="441" y="483" width="1" height="1" fill="#ff0000"/>
<rect x="476" y="483" width="1" height="1" fill="#ff0000"/>
<rect x="477" y="483" width="1" height="1" fill="#ff0000"/>
<rect x="479" y="483" width="1" height="1" fill="#ff0000"/>
<rect x="480" y="483" width="1" height="1" fill="#ff0000"/>
<rect x="485" y="483" width="1" height="1" fill="#ff0000"/>
<rect x="487" y="483" width="1" height="1" fill="#ff0000"/>
<rect x="488" y="483" width="1" height="1" fill="#ff0000"/>
<rect x="519" y="483" width="1" height="1" fill="#ff0000"/>
<rect x="520" y="483" width="1" height="1" fill="#ff0000"/>
<rect x="525" y="483" width="1" height="1" fill="#ff0000"/>
<rect x="527" y="483" width="1" height="1" fill="#ff0000"/>
<rect x="528" y="483" width="1" height="1" fill="#ff0000"/>
<rect x="533" y="483" width="1" height="1" fill="#ff0000"/>
<rect x="535" y="483" width="1" height="1" fill="#ff0000"/>
<rect x="536" y="483" width="1" height="1" fill="#ff0000"/>
<rect x="566" y="483" width="1" height="1" fill="#ff0000"/>
<rect x="567" y="483" width="1" height="1" fill="#ff0000"/>
<rect x="572" y="483" width="1" height="1" fill="#ff0000"/>
<rect x="574" y="483" width="1" height="1" fill="#ff0000"/>
<rect x="575" y="483" width="1" height="1" fill="#ff0000"/>
<rect x="580" y="483" width="1" height="1" fill="#ff0000"/>
<rect x="582" y="483" width="1" height="1" fill="#ff0000"/>
<rect x="583" y="483" width="1" height="1" fill="#ff0000"/>
<rect x="613" y="483" width="1" height="1" fill="#ff0000"/>
<rect x="614" y="483" width="1" height="1" fill="#ff0000"/>
<rect x="619" y="483" width="1" height="1" fill="#ff0000"/>
<rect x="621" y="483" width="1" height="1" fill="#ff0000"/>
<rect x="622" y="483" width="1" height="1" fill="#ff0000"/>
<rect x="626" y="483" width="1" height="1" fill="#ff0000"/>
<rect x="628" y="483" width="1" height="1" fill="#ff0000"/>
<rect x="629" y="483" width="1" height="1" fill="#ff0000"/>
<rect x="664" y="483" width="1" height="1" fill="#ff0000"/>
<rect x="665" y="483" width="1" height="1" fill="#ff0000"/>
<rect x="667" y="483" width="1" height="1" fill="#ff0000"/>
<rect x="668" y="483" width="1" height="1" fill="#ff0000"/>
<rect x="147" y="19" width="1" height="6" fill="#fff"/>
<rect x="186" y="19" width="1" height="6" fill="#fff"/>
<rect x="225" y="19" width="1" height="6" fill="#fff"/>
<rect x="264" y="19" width="1" height="11" fill="#fff"/>
<rect x="303" y="19" width="1" height="6" fill="#fff"/>
<rect x="342" y="19" width="1" height="6" fill="#fff"/>
<rect x="381" y="19" width="1" height="6" fill="#fff"/>
<rect x="420" y="19" width="1" height="11" fill="#fff"/>
<rect x="459" y="19" width="1" height="6" fill="#fff"/>
<rect x="499" y="19" width="1" height="6" fill="#fff"/>
<rect x="538" y="19" width="1" height="6" fill="#fff"/>
<rect x="577" y="19" width="1" height="11" fill="#fff"/>
<rect x="616" y="19" width="1" height="6" fill="#fff"/>
<rect x="655" y="19" width="1" height="6" fill="#fff"/>
</g>
<g style="will-change:opacity">
<text x="108" y="15.4" text-anchor="middle" fill="#fff" font-size="12.5" textLength="33" lengthAdjust="spacingAndGlyphs">00:00</text>
<text x="108" y="503.4" text-anchor="middle" fill="#fff" font-size="12.5" textLength="33" lengthAdjust="spacingAndGlyphs">00:00</text>
<text x="264" y="15.4" text-anchor="middle" fill="#fff" font-size="12.5" textLength="33" lengthAdjust="spacingAndGlyphs">20:00</text>
<text x="264" y="503.4" text-anchor="middle" fill="#fff" font-size="12.5" textLength="33" lengthAdjust="spacingAndGlyphs">20:00</text>
<text x="421" y="15.4" text-anchor="middle" fill="#fff" font-size="12.5" textLength="33" lengthAdjust="spacingAndGlyphs">16:00</text>
<text x="421" y="503.4" text-anchor="middle" fill="#fff" font-size="12.5" textLength="33" lengthAdjust="spacingAndGlyphs">16:00</text>
<text x="577.5" y="15.4" text-anchor="middle" fill="#fff" font-size="12.5" textLength="33" lengthAdjust="spacingAndGlyphs">12:00</text>
<text x="577.5" y="503.4" text-anchor="middle" fill="#fff" font-size="12.5" textLength="33" lengthAdjust="spacingAndGlyphs">12:00</text>
<text x="18" y="62" text-anchor="start" fill="#fff" font-size="12.5" textLength="14.6" lengthAdjust="spacingAndGlyphs">TM</text>
<text x="39.2" y="62" text-anchor="start" fill="#fff" font-size="12.5" textLength="57" lengthAdjust="spacingAndGlyphs">SUBMODE</text>
<text x="6.8" y="109" text-anchor="start" fill="#fff" font-size="12.5" textLength="37.2" lengthAdjust="spacingAndGlyphs">LASCO</text>
<text x="44.3" y="111.4" text-anchor="start" fill="#fff" font-size="17.5" stroke="#000" stroke-width="0.6" textLength="8.8" lengthAdjust="spacingAndGlyphs">/</text>
<text x="52.9" y="109" text-anchor="start" fill="#fff" font-size="12.5" textLength="14.6" lengthAdjust="spacingAndGlyphs">EIT</text>
<text x="74.6" y="109" text-anchor="start" fill="#fff" font-size="12.5" textLength="26.6" lengthAdjust="spacingAndGlyphs">(OP)</text>
<text x="107" y="38.6" text-anchor="end" fill="#fff" font-size="12.5">5</text>
<text x="107" y="47.93" text-anchor="end" fill="#fff" font-size="12.5">4</text>
<text x="107" y="57.260000000000005" text-anchor="end" fill="#fff" font-size="12.5">3</text>
<text x="107" y="66.59" text-anchor="end" fill="#fff" font-size="12.5">2</text>
<text x="107" y="75.92" text-anchor="end" fill="#fff" font-size="12.5">1</text>
<text x="48.6" y="149.9" text-anchor="start" fill="#fff" font-size="12.5" textLength="16" lengthAdjust="spacingAndGlyphs">OS</text>
<text x="64.2" y="147.1" text-anchor="start" fill="#fff" font-size="12.5" textLength="8.2" lengthAdjust="spacingAndGlyphs">_</text>
<text x="72.3" y="149.9" text-anchor="start" fill="#fff" font-size="12.5" textLength="29.2" lengthAdjust="spacingAndGlyphs">3092</text>
<text x="48.6" y="174.9" text-anchor="start" fill="#fff" font-size="12.5" textLength="16" lengthAdjust="spacingAndGlyphs">OS</text>
<text x="64.2" y="172.1" text-anchor="start" fill="#fff" font-size="12.5" textLength="8.2" lengthAdjust="spacingAndGlyphs">_</text>
<text x="72.3" y="174.9" text-anchor="start" fill="#fff" font-size="12.5" textLength="29.2" lengthAdjust="spacingAndGlyphs">3342</text>
<text x="48.6" y="200.9" text-anchor="start" fill="#fff" font-size="12.5" textLength="16" lengthAdjust="spacingAndGlyphs">OS</text>
<text x="64.2" y="198.1" text-anchor="start" fill="#fff" font-size="12.5" textLength="8.2" lengthAdjust="spacingAndGlyphs">_</text>
<text x="72.3" y="200.9" text-anchor="start" fill="#fff" font-size="12.5" textLength="29.2" lengthAdjust="spacingAndGlyphs">3361</text>
<text x="48.6" y="226.9" text-anchor="start" fill="#fff" font-size="12.5" textLength="16" lengthAdjust="spacingAndGlyphs">OS</text>
<text x="64.2" y="224.1" text-anchor="start" fill="#fff" font-size="12.5" textLength="8.2" lengthAdjust="spacingAndGlyphs">_</text>
<text x="72.3" y="226.9" text-anchor="start" fill="#fff" font-size="12.5" textLength="29.2" lengthAdjust="spacingAndGlyphs">3387</text>
<text x="48.6" y="251.9" text-anchor="start" fill="#fff" font-size="12.5" textLength="16" lengthAdjust="spacingAndGlyphs">OS</text>
<text x="64.2" y="249.1" text-anchor="start" fill="#fff" font-size="12.5" textLength="8.2" lengthAdjust="spacingAndGlyphs">_</text>
<text x="72.3" y="251.9" text-anchor="start" fill="#fff" font-size="12.5" textLength="29.2" lengthAdjust="spacingAndGlyphs">3389</text>
<text x="48.6" y="276.9" text-anchor="start" fill="#fff" font-size="12.5" textLength="16" lengthAdjust="spacingAndGlyphs">OS</text>
<text x="64.2" y="274.09999999999997" text-anchor="start" fill="#fff" font-size="12.5" textLength="8.2" lengthAdjust="spacingAndGlyphs">_</text>
<text x="72.3" y="276.9" text-anchor="start" fill="#fff" font-size="12.5" textLength="29.2" lengthAdjust="spacingAndGlyphs">3390</text>
<text x="48.6" y="302.9" text-anchor="start" fill="#fff" font-size="12.5" textLength="16" lengthAdjust="spacingAndGlyphs">OS</text>
<text x="64.2" y="300.09999999999997" text-anchor="start" fill="#fff" font-size="12.5" textLength="8.2" lengthAdjust="spacingAndGlyphs">_</text>
<text x="72.3" y="302.9" text-anchor="start" fill="#fff" font-size="12.5" textLength="29.2" lengthAdjust="spacingAndGlyphs">3405</text>
<text x="48.6" y="328.9" text-anchor="start" fill="#fff" font-size="12.5" textLength="16" lengthAdjust="spacingAndGlyphs">OS</text>
<text x="64.2" y="326.09999999999997" text-anchor="start" fill="#fff" font-size="12.5" textLength="8.2" lengthAdjust="spacingAndGlyphs">_</text>
<text x="72.3" y="328.9" text-anchor="start" fill="#fff" font-size="12.5" textLength="29.2" lengthAdjust="spacingAndGlyphs">3422</text>
<text x="48.6" y="353.9" text-anchor="start" fill="#fff" font-size="12.5" textLength="16" lengthAdjust="spacingAndGlyphs">OS</text>
<text x="64.2" y="351.09999999999997" text-anchor="start" fill="#fff" font-size="12.5" textLength="8.2" lengthAdjust="spacingAndGlyphs">_</text>
<text x="72.3" y="353.9" text-anchor="start" fill="#fff" font-size="12.5" textLength="29.2" lengthAdjust="spacingAndGlyphs">3532</text>
<text x="48.6" y="379.9" text-anchor="start" fill="#fff" font-size="12.5" textLength="16" lengthAdjust="spacingAndGlyphs">OS</text>
<text x="64.2" y="377.09999999999997" text-anchor="start" fill="#fff" font-size="12.5" textLength="8.2" lengthAdjust="spacingAndGlyphs">_</text>
<text x="72.3" y="379.9" text-anchor="start" fill="#fff" font-size="12.5" textLength="29.2" lengthAdjust="spacingAndGlyphs">3568</text>
<text x="48.6" y="404.9" text-anchor="start" fill="#fff" font-size="12.5" textLength="16" lengthAdjust="spacingAndGlyphs">OS</text>
<text x="64.2" y="402.09999999999997" text-anchor="start" fill="#fff" font-size="12.5" textLength="8.2" lengthAdjust="spacingAndGlyphs">_</text>
<text x="72.3" y="404.9" text-anchor="start" fill="#fff" font-size="12.5" textLength="29.2" lengthAdjust="spacingAndGlyphs">3570</text>
<text x="7.0" y="453" text-anchor="start" fill="#fff" font-size="12.5" textLength="36.2" lengthAdjust="spacingAndGlyphs">LASCO</text>
<text x="44.4" y="453" text-anchor="start" fill="#fff" font-size="12.5" textLength="9" lengthAdjust="spacingAndGlyphs">-</text>
<text x="54.0" y="453" text-anchor="start" fill="#fff" font-size="12.5" textLength="36" lengthAdjust="spacingAndGlyphs">buffer</text>
<text x="107" y="431.6" text-anchor="end" fill="#fff" font-size="12.5" textLength="19.7" lengthAdjust="spacingAndGlyphs">100</text>
<text x="107" y="443.6" text-anchor="end" fill="#fff" font-size="12.5">80</text>
<text x="107" y="476.6" text-anchor="end" fill="#fff" font-size="12.5">20</text>
<text x="107" y="488.6" text-anchor="end" fill="#fff" font-size="12.5">0</text>
<text x="307.3" y="518.6" text-anchor="start" fill="#fff" font-size="12.5" textLength="29.6" lengthAdjust="spacingAndGlyphs">2003</text>
<text x="338.0" y="520.8" text-anchor="start" fill="#fff" font-size="17" stroke="#000" stroke-width="0.45" textLength="8.4" lengthAdjust="spacingAndGlyphs">/</text>
<text x="346.6" y="518.6" text-anchor="start" fill="#fff" font-size="12.5" textLength="14.6" lengthAdjust="spacingAndGlyphs">04</text>
<text x="361.8" y="520.8" text-anchor="start" fill="#fff" font-size="17" stroke="#000" stroke-width="0.45" textLength="8.4" lengthAdjust="spacingAndGlyphs">/</text>
<text x="370.3" y="518.6" text-anchor="start" fill="#fff" font-size="12.5" textLength="14.6" lengthAdjust="spacingAndGlyphs">23</text>
<text x="391.3" y="518.6" text-anchor="start" fill="#fff" font-size="12.5" textLength="79.4" lengthAdjust="spacingAndGlyphs">00:00:00.000</text>
<text x="13.4" y="519.9" text-anchor="start" fill="#ff0000" font-size="9.5" stroke="#ff0000" stroke-width="0.3" textLength="11.6" lengthAdjust="spacingAndGlyphs">C1</text>
<text x="34.6" y="519.9" text-anchor="start" fill="#00ff00" font-size="9.5" stroke="#00ff00" stroke-width="0.3" textLength="12.8" lengthAdjust="spacingAndGlyphs">C2</text>
<text x="55.4" y="519.9" text-anchor="start" fill="#8ce4f4" font-size="9.5" stroke="#8ce4f4" stroke-width="0.3" textLength="13" lengthAdjust="spacingAndGlyphs">C3</text>
<text x="76.4" y="519.9" text-anchor="start" fill="#ffff00" font-size="9.5" stroke="#ffff00" stroke-width="0.3" textLength="13.6" lengthAdjust="spacingAndGlyphs">EIT</text>
</g>
</svg>
</body></html>
